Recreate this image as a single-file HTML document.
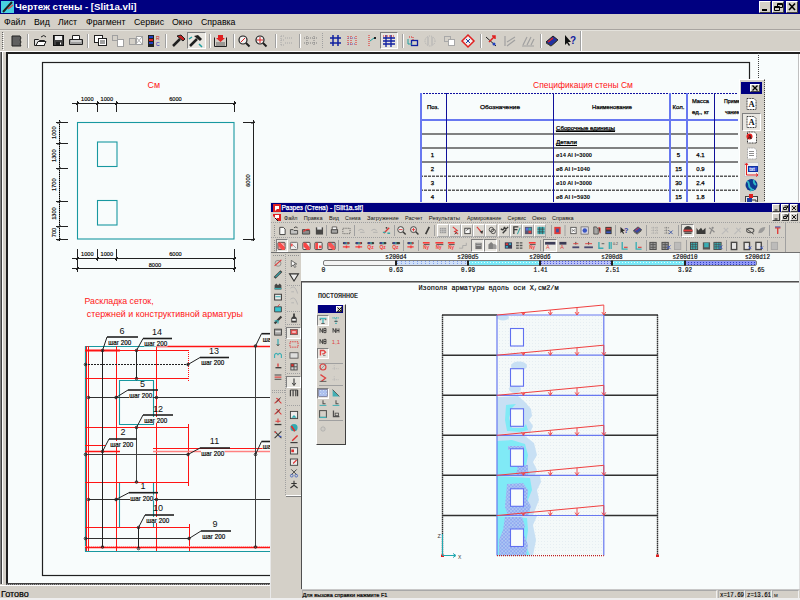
<!DOCTYPE html><html><head><meta charset="utf-8"><style>
*{margin:0;padding:0;box-sizing:border-box}
html,body{width:800px;height:600px;overflow:hidden;background:#d4d0c8;font-family:"Liberation Sans",sans-serif;}
.abs{position:absolute}
.t{position:absolute;white-space:nowrap;line-height:1}
svg{position:absolute;left:0;top:0;overflow:visible}
</style></head><body>
<div class="abs" style="left:0;top:0;width:800px;height:14px;background:#000080"></div><div class="t" style="left:15px;top:2px;font-size:9.7px;font-weight:bold;color:#fff">Чертеж стены - [Slit1a.vli]</div><div class="abs" style="left:759px;top:1px;width:12px;height:12px;background:#d4d0c8;border-top:1px solid #fff;border-left:1px solid #fff;border-right:1px solid #404040;border-bottom:1px solid #404040"></div><div class="abs" style="left:772px;top:1px;width:12px;height:12px;background:#d4d0c8;border-top:1px solid #fff;border-left:1px solid #fff;border-right:1px solid #404040;border-bottom:1px solid #404040"></div><div class="abs" style="left:786px;top:1px;width:12px;height:12px;background:#d4d0c8;border-top:1px solid #fff;border-left:1px solid #fff;border-right:1px solid #404040;border-bottom:1px solid #404040"></div><div class="t" style="left:4px;top:17.5px;font-size:8.8px;color:#000">Файл</div><div class="t" style="left:34px;top:17.5px;font-size:8.8px;color:#000">Вид</div><div class="t" style="left:58px;top:17.5px;font-size:8.8px;color:#000">Лист</div><div class="t" style="left:86px;top:17.5px;font-size:8.8px;color:#000">Фрагмент</div><div class="t" style="left:134px;top:17.5px;font-size:8.8px;color:#000">Сервис</div><div class="t" style="left:172px;top:17.5px;font-size:8.8px;color:#000">Окно</div><div class="t" style="left:201px;top:17.5px;font-size:8.8px;color:#000">Справка</div><div class="abs" style="left:0;top:29px;width:800px;height:1px;background:#a8a4a0"></div><div class="abs" style="left:0;top:30px;width:800px;height:1px;background:#e4e2dc"></div><div class="abs" style="left:187px;top:32px;width:19px;height:17px;background:#e8e6e0;border-top:1px solid #808080;border-left:1px solid #808080;border-right:1px solid #fff;border-bottom:1px solid #fff"></div><div class="abs" style="left:380px;top:32px;width:18px;height:17px;background:#e8e6e0;border-top:1px solid #808080;border-left:1px solid #808080;border-right:1px solid #fff;border-bottom:1px solid #fff"></div><div class="abs" style="left:0;top:51px;width:800px;height:1px;background:#fff"></div><div class="abs" style="left:0;top:52px;width:2px;height:532px;background:#404040"></div><div class="abs" style="left:0;top:52px;width:1px;height:532px;background:#808080"></div><div class="abs" style="left:2px;top:52px;width:1px;height:532px;background:#fff"></div><div class="abs" style="left:6px;top:52px;width:794px;height:2px;background:#202020"></div><div class="abs" style="left:6px;top:52px;width:2px;height:533px;background:#202020"></div><div class="abs" style="left:8px;top:54px;width:790px;height:529px;background:#f8fcfc"></div><div class="abs" style="left:6px;top:583px;width:794px;height:1px;background:#404040"></div><div class="abs" style="left:6px;top:584px;width:794px;height:1px;background:repeating-linear-gradient(90deg,#505050 0 1px,#a0a0a0 1px 2px)"></div><div class="abs" style="left:798px;top:54px;width:1px;height:530px;background:#c0c0c0"></div><div class="abs" style="left:799px;top:54px;width:1px;height:530px;background:#fff"></div><div class="abs" style="left:0;top:585px;width:800px;height:1px;background:#fff"></div><div class="t" style="left:1px;top:589.5px;font-size:9px;color:#000;-webkit-text-stroke:0.2px #000">Готово</div><svg width="800" height="600"><rect x="1" y="1" width="13" height="12" fill="#48d0e0"/><path d="M3 12 L12 2" stroke="#202020" stroke-width="2"/><path d="M8 9 L13 5" stroke="#e04848" stroke-width="1.5"/><rect x="762" y="9" width="5" height="2" fill="#000"/><path d="M777.5 3.5h5v4h-5z M777.5 4.5h5" fill="none" stroke="#000"/><path d="M774.5 6.5h5v4h-5z M774.5 7.5h5" fill="#d4d0c8" stroke="#000"/><path d="M789 3.5 L795 10 M795 3.5 L789 10" stroke="#000" stroke-width="1.6"/><path d="M2.5 32v18" stroke="#606060" stroke-dasharray="1 1"/><path d="M3.5 33v18" stroke="#fff" stroke-dasharray="1 1"/><path d="M27.5 34v14" stroke="#a0a0a0"/><path d="M28.5 34v14" stroke="#fff"/><path d="M87.5 34v14" stroke="#a0a0a0"/><path d="M88.5 34v14" stroke="#fff"/><path d="M165.5 34v14" stroke="#a0a0a0"/><path d="M166.5 34v14" stroke="#fff"/><path d="M209.5 34v14" stroke="#a0a0a0"/><path d="M210.5 34v14" stroke="#fff"/><path d="M233.5 34v14" stroke="#a0a0a0"/><path d="M234.5 34v14" stroke="#fff"/><path d="M275.5 34v14" stroke="#a0a0a0"/><path d="M276.5 34v14" stroke="#fff"/><path d="M299.5 34v14" stroke="#a0a0a0"/><path d="M300.5 34v14" stroke="#fff"/><path d="M402.5 34v14" stroke="#a0a0a0"/><path d="M403.5 34v14" stroke="#fff"/><path d="M480.5 34v14" stroke="#a0a0a0"/><path d="M481.5 34v14" stroke="#fff"/><path d="M540.5 34v14" stroke="#a0a0a0"/><path d="M541.5 34v14" stroke="#fff"/><path d="M322.5 33v16" stroke="#a0a0a0" stroke-dasharray="1 1"/><path d="M580.5 31v20" stroke="#a0a0a0"/><path d="M581.5 31v20" stroke="#fff"/><path d="M12 36h8l1 2-1 2 1 2-1 2 1 2h-9z" fill="#606060" stroke="#202020"/><path d="M34.5 39.5h4l1 1h5v5h-10z" fill="#e0e0e0" stroke="#202020"/><path d="M36 45.5l2-4h8l-2 4z" fill="#fff" stroke="#202020"/><path d="M41 37q3-3 5 0" fill="none" stroke="#202020"/><rect x="53.5" y="35.5" width="10" height="10" fill="#404040" stroke="#101010"/><rect x="55" y="36" width="7" height="4" fill="#f0f0f0"/><rect x="56" y="42" width="5" height="3" fill="#202020"/><rect x="60" y="42.5" width="1" height="2" fill="#fff"/><path d="M72.5 35.5h7v4h-7z" fill="#fff" stroke="#202020"/><path d="M69.5 39.5h13v5h-13z" fill="#a0a0a0" stroke="#202020"/><path d="M71 41h10" stroke="#fff"/><rect x="94.5" y="35.5" width="8" height="7" fill="#fff" stroke="#202020"/><rect x="98.5" y="38.5" width="8" height="7" fill="#fff" stroke="#202020"/><path d="M100 41h5M100 43h5" stroke="#404040"/><rect x="112.5" y="35.5" width="5" height="5" fill="none" stroke="#a0a0a0"/><rect x="117.5" y="39.5" width="6" height="7" fill="#fff" stroke="#a0a0a0"/><rect x="129.5" y="38.5" width="6" height="6" fill="none" stroke="#a0a0a0"/><rect x="136.5" y="36.5" width="6" height="8" fill="#fff" stroke="#a0a0a0"/><path d="M136 37l6 7M142 37l-6 7" stroke="#b0b0b0"/><rect x="148" y="35" width="6" height="12" fill="#202020"/><rect x="149" y="36" width="4" height="2" fill="#2040c0"/><rect x="149" y="39" width="4" height="2" fill="#e02020"/><rect x="149" y="42" width="4" height="2" fill="#2040c0"/><text x="156" y="40" font-size="5" fill="#d02020" font-family="Liberation Sans">R</text><text x="156" y="46" font-size="5" fill="#2020c0" font-family="Liberation Sans">C</text><path d="M173 46l7-7" stroke="#202020" stroke-width="2.5"/><path d="M177 36l4-1 4 4-2 2z" fill="#c02020" stroke="#202020"/><path d="M190 46l7-7" stroke="#202020" stroke-width="2.5"/><path d="M194 36l4-1 4 4-2 2z" fill="#202020"/><path d="M189 39l3-2M199 44l3 3" stroke="#20a0a0" stroke-width="1.5"/><path d="M214.5 37.5v9h12v-9" fill="none" stroke="#202020"/><path d="M216 43h9M216 45h9" stroke="#606060"/><path d="M218 35h5v3h2l-4.5 4-4.5-4h2z" fill="#e02020"/><circle cx="243" cy="40" r="4" fill="#f0f0f0" stroke="#202020" stroke-width="1.2"/><path d="M246 43l3.5 3.5" stroke="#202020" stroke-width="2"/><path d="M241 42l4-4" stroke="#e02020"/><circle cx="260" cy="40" r="4" fill="#f0f0f0" stroke="#202020" stroke-width="1.2"/><path d="M263 43l3.5 3.5" stroke="#202020" stroke-width="2"/><path d="M260 37v6M257 40h6" stroke="#e02020"/><path d="M281 36v10M281 36h3M281 40h3M281 45h3M285 38h7M285 43h7" stroke="#a8a8a8" stroke-dasharray="1 1"/><path d="M304 38h13M304 43h13M307 36v10M314 36v10" stroke="#808080" stroke-dasharray="1 1"/><path d="M330 38h11M330 43h11M333 35v11M338 35v11" stroke="#1020a0" stroke-width="1.5"/><path d="M348 36v10M351 36v10M356 36v10" stroke="#e02020" stroke-dasharray="1 1"/><path d="M348 38h8M348 44h8" stroke="#6060c0" stroke-dasharray="1 1"/><path d="M369 35v11" stroke="#e02020" stroke-dasharray="1 1"/><path d="M370 41l4-3" stroke="#20a0a0"/><rect x="374" y="37" width="2" height="2" fill="#202020"/><path d="M383 38h12M383 41h12M383 44h12M386 35v12M391 35v12" stroke="#1020a0" stroke-width="1.3"/><path d="M383 36h12" stroke="#e02020" stroke-dasharray="1 1"/><path d="M409 37h4v3" stroke="#e02020" fill="none" stroke-dasharray="1 1"/><rect x="411.5" y="40.5" width="6" height="5" fill="none" stroke="#1020a0" stroke-width="1.3"/><path d="M408 39v5h4" stroke="#20a0a0" fill="none"/><circle cx="430" cy="41" r="5" fill="none" stroke="#b0b0b0" stroke-dasharray="1 1"/><path d="M428 37v8M432 37v8" stroke="#b0b0b0"/><rect x="444.5" y="36.5" width="6" height="5" fill="none" stroke="#a8a8a8"/><rect x="448.5" y="39.5" width="6" height="6" fill="#fff" stroke="#a8a8a8"/><path d="M468 35l6 6-6 6-6-6z" fill="#f0f0f0" stroke="#e02020" stroke-width="1.5"/><path d="M466 39l4 4M470 39l-4 4" stroke="#2040a0"/><path d="M486 37l10 9" stroke="#202020"/><path d="M489 42l6-6m-3 0h3v3" stroke="#e02020" stroke-width="1.5" fill="none"/><circle cx="494" cy="44" r="1.5" fill="#2040c0"/><path d="M505 36v10M507 46l8-6M507 42l8-5" stroke="#a0a0a0" stroke-width="1.2"/><path d="M522 46h12M523 45l4-8M527 45l4-8M531 45l3-6" stroke="#a0a0a0" stroke-width="1.2"/><path d="M546 42l7-6 5 4-7 6z" fill="#2030a0" stroke="#202020"/><path d="M548 42l5-4" stroke="#e02020" stroke-width="1.5"/><path d="M546 43l5 3 7-6" fill="none" stroke="#404040"/><path d="M565 35v10l2-2 2 3 1-1-2-3h3z" fill="#101010"/><text x="570" y="44" font-size="10" font-weight="bold" fill="#1020a0" font-family="Liberation Sans">?</text></svg><svg width="800" height="600"><rect x="42.5" y="62.5" width="707" height="513" fill="none" stroke="#202020" stroke-width="1.2"/><path d="M758.5 53v26" stroke="#404040" stroke-dasharray="1 1"/><text x="147.5" y="87.5" font-size="8.9" fill="#ff1414" font-family='"Liberation Sans",sans-serif' font-weight="normal" text-anchor="start" >См</text><rect x="77.5" y="122.5" width="156.5" height="116.5" fill="none" stroke="#1898a0" stroke-width="1.1"/><rect x="97.5" y="142" width="19.5" height="24.5" fill="none" stroke="#1898a0" stroke-width="1.1"/><rect x="97.5" y="200.5" width="19.5" height="24.5" fill="none" stroke="#1898a0" stroke-width="1.1"/><path d="M72 103.5H236" stroke="#202020"/><path d="M77.5 101v11" stroke="#202020"/><path d="M76.0 105l3-3" stroke="#202020"/><path d="M97.5 101v11" stroke="#202020"/><path d="M96.0 105l3-3" stroke="#202020"/><path d="M116.5 101v11" stroke="#202020"/><path d="M115.0 105l3-3" stroke="#202020"/><path d="M234.5 101v11" stroke="#202020"/><path d="M233.0 105l3-3" stroke="#202020"/><text x="87.3" y="101.3" font-size="6.2" fill="#000" font-family='"Liberation Sans",sans-serif' font-weight="normal" text-anchor="middle" stroke="#000" stroke-width="0.15" textLength="12.5" lengthAdjust="spacingAndGlyphs">1000</text><text x="106.8" y="101.3" font-size="6.2" fill="#000" font-family='"Liberation Sans",sans-serif' font-weight="normal" text-anchor="middle" stroke="#000" stroke-width="0.15" textLength="12.5" lengthAdjust="spacingAndGlyphs">1000</text><text x="175.5" y="101.3" font-size="6.2" fill="#000" font-family='"Liberation Sans",sans-serif' font-weight="normal" text-anchor="middle" stroke="#000" stroke-width="0.15" textLength="12.5" lengthAdjust="spacingAndGlyphs">6000</text><path d="M59.5 120V241" stroke="#000" stroke-dasharray="1.5 0.5"/><path d="M56 122.5h12" stroke="#202020"/><path d="M57.5 124.0l3-3" stroke="#202020"/><path d="M56 143.5h12" stroke="#202020"/><path d="M57.5 145.0l3-3" stroke="#202020"/><path d="M56 168.5h12" stroke="#202020"/><path d="M57.5 170.0l3-3" stroke="#202020"/><path d="M56 201.5h12" stroke="#202020"/><path d="M57.5 203.0l3-3" stroke="#202020"/><path d="M56 226.5h12" stroke="#202020"/><path d="M57.5 228.0l3-3" stroke="#202020"/><path d="M56 239.5h12" stroke="#202020"/><path d="M57.5 241.0l3-3" stroke="#202020"/><text x="0" y="0" font-size="6.2" fill="#000" stroke="#000" stroke-width="0.15" font-family='"Liberation Sans",sans-serif' text-anchor="middle" textLength="12.5" lengthAdjust="spacingAndGlyphs" transform="translate(55.6 132.7) rotate(-90)">1000</text><text x="0" y="0" font-size="6.2" fill="#000" stroke="#000" stroke-width="0.15" font-family='"Liberation Sans",sans-serif' text-anchor="middle" textLength="12.5" lengthAdjust="spacingAndGlyphs" transform="translate(55.6 155.7) rotate(-90)">1300</text><text x="0" y="0" font-size="6.2" fill="#000" stroke="#000" stroke-width="0.15" font-family='"Liberation Sans",sans-serif' text-anchor="middle" textLength="12.5" lengthAdjust="spacingAndGlyphs" transform="translate(55.6 184.7) rotate(-90)">1700</text><text x="0" y="0" font-size="6.2" fill="#000" stroke="#000" stroke-width="0.15" font-family='"Liberation Sans",sans-serif' text-anchor="middle" textLength="12.5" lengthAdjust="spacingAndGlyphs" transform="translate(55.6 213.5) rotate(-90)">1300</text><text x="0" y="0" font-size="6.2" fill="#000" stroke="#000" stroke-width="0.15" font-family='"Liberation Sans",sans-serif' text-anchor="middle" textLength="9.5" lengthAdjust="spacingAndGlyphs" transform="translate(55.6 232.5) rotate(-90)">700</text><path d="M253.5 120V241" stroke="#202020"/><path d="M243 122.5h12" stroke="#202020"/><path d="M251.5 124.0l3-3" stroke="#202020"/><path d="M243 239.5h12" stroke="#202020"/><path d="M251.5 241.0l3-3" stroke="#202020"/><text x="0" y="0" font-size="6.2" fill="#000" stroke="#000" stroke-width="0.15" font-family='"Liberation Sans",sans-serif' text-anchor="middle" textLength="12.5" lengthAdjust="spacingAndGlyphs" transform="translate(250 180.5) rotate(-90)">6000</text><path d="M72 258.5H236" stroke="#202020"/><path d="M77.5 249v12" stroke="#202020"/><path d="M76.0 260l3-3" stroke="#202020"/><path d="M97.5 249v12" stroke="#202020"/><path d="M96.0 260l3-3" stroke="#202020"/><path d="M116.5 249v12" stroke="#202020"/><path d="M115.0 260l3-3" stroke="#202020"/><path d="M234.5 249v12" stroke="#202020"/><path d="M233.0 260l3-3" stroke="#202020"/><text x="87.3" y="256.2" font-size="6.2" fill="#000" font-family='"Liberation Sans",sans-serif' font-weight="normal" text-anchor="middle" stroke="#000" stroke-width="0.15" textLength="12.5" lengthAdjust="spacingAndGlyphs">1000</text><text x="106.8" y="256.2" font-size="6.2" fill="#000" font-family='"Liberation Sans",sans-serif' font-weight="normal" text-anchor="middle" stroke="#000" stroke-width="0.15" textLength="12.5" lengthAdjust="spacingAndGlyphs">1000</text><text x="175.5" y="256.2" font-size="6.2" fill="#000" font-family='"Liberation Sans",sans-serif' font-weight="normal" text-anchor="middle" stroke="#000" stroke-width="0.15" textLength="12.5" lengthAdjust="spacingAndGlyphs">6000</text><path d="M72 268.5H236" stroke="#202020"/><path d="M77.5 261v11" stroke="#202020"/><path d="M76.0 270l3-3" stroke="#202020"/><path d="M234.5 261v11" stroke="#202020"/><path d="M233.0 270l3-3" stroke="#202020"/><text x="155" y="266.5" font-size="6.2" fill="#000" font-family='"Liberation Sans",sans-serif' font-weight="normal" text-anchor="middle" stroke="#000" stroke-width="0.15" textLength="12.5" lengthAdjust="spacingAndGlyphs">8000</text><text x="84.5" y="303.6" font-size="8.75" fill="#ff1414" font-family='"Liberation Sans",sans-serif' font-weight="normal" text-anchor="start" >Раскладка сеток,</text><text x="86.8" y="316.7" font-size="8.9" fill="#ff1414" font-family='"Liberation Sans",sans-serif' font-weight="normal" text-anchor="start" >стержней и конструктивной арматуры</text><text x="533" y="88" font-size="8.5" fill="#ff1414" font-family='"Liberation Sans",sans-serif' font-weight="normal" text-anchor="start" >Спецификация стены См</text><path d="M420 134H738" stroke="#585858" stroke-width="1.6" /><path d="M420 148H738" stroke="#585858" stroke-width="1.6" /><path d="M420 162H738" stroke="#585858" stroke-width="1.6" /><path d="M420 176.2H738" stroke="#585858" stroke-width="1.6" stroke-dasharray="3 1"/><path d="M420 190.3H738" stroke="#585858" stroke-width="1.6" stroke-dasharray="3 1"/><path d="M420 204.5H738" stroke="#585858" stroke-width="1.6" stroke-dasharray="3 1"/><path d="M420 93.5H738" stroke="#1010a0" stroke-dasharray="2 1"/><path d="M420 120H738" stroke="#6878f0" stroke-width="2"/><path d="M421 93V210" stroke="#6878f0" stroke-width="2"/><path d="M670 93V210" stroke="#6878f0" stroke-width="2"/><path d="M687 93V210" stroke="#6878f0" stroke-width="2"/><path d="M446.5 93V210" stroke="#10109a"/><path d="M553.5 93V210" stroke="#10109a"/><path d="M714.5 93V210" stroke="#10109a"/><text x="433" y="109" font-size="6" fill="#000" font-family='"Liberation Sans",sans-serif' font-weight="normal" text-anchor="middle" stroke="#000" stroke-width="0.25" textLength="12" lengthAdjust="spacingAndGlyphs">Поз.</text><text x="500" y="109" font-size="6" fill="#000" font-family='"Liberation Sans",sans-serif' font-weight="normal" text-anchor="middle" stroke="#000" stroke-width="0.25" textLength="40" lengthAdjust="spacingAndGlyphs">Обозначение</text><text x="612" y="109" font-size="6" fill="#000" font-family='"Liberation Sans",sans-serif' font-weight="normal" text-anchor="middle" stroke="#000" stroke-width="0.25" textLength="40" lengthAdjust="spacingAndGlyphs">Наименование</text><text x="678.5" y="109" font-size="6" fill="#000" font-family='"Liberation Sans",sans-serif' font-weight="normal" text-anchor="middle" stroke="#000" stroke-width="0.25" textLength="12" lengthAdjust="spacingAndGlyphs">Кол.</text><text x="700.5" y="103" font-size="6" fill="#000" font-family='"Liberation Sans",sans-serif' font-weight="normal" text-anchor="middle" stroke="#000" stroke-width="0.25" textLength="17" lengthAdjust="spacingAndGlyphs">Масса</text><text x="700.5" y="113.5" font-size="6" fill="#000" font-family='"Liberation Sans",sans-serif' font-weight="normal" text-anchor="middle" stroke="#000" stroke-width="0.25" textLength="17" lengthAdjust="spacingAndGlyphs">ед., кг</text><text x="724" y="103" font-size="6" fill="#000" font-family='"Liberation Sans",sans-serif' font-weight="normal" text-anchor="start" stroke="#000" stroke-width="0.25" textLength="18" lengthAdjust="spacingAndGlyphs">Приме-</text><text x="725" y="113.5" font-size="6" fill="#000" font-family='"Liberation Sans",sans-serif' font-weight="normal" text-anchor="start" stroke="#000" stroke-width="0.25" textLength="14" lengthAdjust="spacingAndGlyphs">чание</text><text x="556" y="129.5" font-size="6" fill="#000" font-family='"Liberation Sans",sans-serif' font-weight="normal" text-anchor="start" stroke="#000" stroke-width="0.25" textLength="59" lengthAdjust="spacingAndGlyphs" text-decoration="underline">Сборочные единицы</text><path d="M556 131.5h59" stroke="#000"/><text x="556" y="143.5" font-size="6" fill="#000" font-family='"Liberation Sans",sans-serif' font-weight="normal" text-anchor="start" stroke="#000" stroke-width="0.25" textLength="21" lengthAdjust="spacingAndGlyphs">Детали</text><path d="M556 145.5h21" stroke="#000"/><text x="432.5" y="156.5" font-size="6" fill="#000" font-family='"Liberation Sans",sans-serif' font-weight="normal" text-anchor="middle" stroke="#000" stroke-width="0.25">1</text><text x="556" y="156.5" font-size="6" fill="#000" font-family='"Liberation Sans",sans-serif' font-weight="bold" text-anchor="start" textLength="36" lengthAdjust="spacingAndGlyphs">ø14 AI l=3000</text><text x="678.5" y="156.5" font-size="6" fill="#000" font-family='"Liberation Sans",sans-serif' font-weight="normal" text-anchor="middle" stroke="#000" stroke-width="0.25">5</text><text x="700.5" y="156.5" font-size="6" fill="#000" font-family='"Liberation Sans",sans-serif' font-weight="normal" text-anchor="middle" stroke="#000" stroke-width="0.25">4.1</text><text x="432.5" y="170.6" font-size="6" fill="#000" font-family='"Liberation Sans",sans-serif' font-weight="normal" text-anchor="middle" stroke="#000" stroke-width="0.25">2</text><text x="556" y="170.6" font-size="6" fill="#000" font-family='"Liberation Sans",sans-serif' font-weight="bold" text-anchor="start" textLength="34" lengthAdjust="spacingAndGlyphs">ø8 AI l=1040</text><text x="678.5" y="170.6" font-size="6" fill="#000" font-family='"Liberation Sans",sans-serif' font-weight="normal" text-anchor="middle" stroke="#000" stroke-width="0.25">15</text><text x="700.5" y="170.6" font-size="6" fill="#000" font-family='"Liberation Sans",sans-serif' font-weight="normal" text-anchor="middle" stroke="#000" stroke-width="0.25">0.9</text><text x="432.5" y="184.7" font-size="6" fill="#000" font-family='"Liberation Sans",sans-serif' font-weight="normal" text-anchor="middle" stroke="#000" stroke-width="0.25">3</text><text x="556" y="184.7" font-size="6" fill="#000" font-family='"Liberation Sans",sans-serif' font-weight="bold" text-anchor="start" textLength="36" lengthAdjust="spacingAndGlyphs">ø10 AI l=3000</text><text x="678.5" y="184.7" font-size="6" fill="#000" font-family='"Liberation Sans",sans-serif' font-weight="normal" text-anchor="middle" stroke="#000" stroke-width="0.25">30</text><text x="700.5" y="184.7" font-size="6" fill="#000" font-family='"Liberation Sans",sans-serif' font-weight="normal" text-anchor="middle" stroke="#000" stroke-width="0.25">2.4</text><text x="432.5" y="198.8" font-size="6" fill="#000" font-family='"Liberation Sans",sans-serif' font-weight="normal" text-anchor="middle" stroke="#000" stroke-width="0.25">4</text><text x="556" y="198.8" font-size="6" fill="#000" font-family='"Liberation Sans",sans-serif' font-weight="bold" text-anchor="start" textLength="34" lengthAdjust="spacingAndGlyphs">ø8 AI l=5930</text><text x="678.5" y="198.8" font-size="6" fill="#000" font-family='"Liberation Sans",sans-serif' font-weight="normal" text-anchor="middle" stroke="#000" stroke-width="0.25">15</text><text x="700.5" y="198.8" font-size="6" fill="#000" font-family='"Liberation Sans",sans-serif' font-weight="normal" text-anchor="middle" stroke="#000" stroke-width="0.25">1.8</text><path d="M85 346.5H156 M85.5 346V551.5 M85 551.5H271" stroke="#1898a0" stroke-width="1.2" fill="none" /><path d="M119.5 380.5h34v44h-34z" stroke="#1898a0" stroke-width="1.1" fill="none" /><path d="M119.5 482v45.5h34V482" stroke="#1898a0" stroke-width="1.1" fill="none" /><path d="M86.5 346V551" stroke="#ff1414" stroke-width="1" fill="none" /><path d="M88.5 346V551" stroke="#ff1414" stroke-width="1" fill="none" /><path d="M116.5 346V551" stroke="#ff1414" stroke-width="1" fill="none" /><path d="M156.5 346V551" stroke="#ff1414" stroke-width="1" fill="none" /><path d="M188.5 350v32" stroke="#ff1414" stroke-width="1" fill="none" stroke-dasharray="1 1"/><path d="M188.5 424v62" stroke="#ff1414" stroke-width="1" fill="none" /><path d="M189.5 524v27" stroke="#ff1414" stroke-width="1" fill="none" /><path d="M156 346.5H271" stroke="#ff1414" stroke-width="1.3" fill="none" /><path d="M85 350.5H188" stroke="#ff1414" stroke-width="1" fill="none" /><path d="M85 350.5H120" stroke="#ff1414" stroke-width="2" fill="none" /><path d="M85 378.5H188" stroke="#ff1414" stroke-width="1" fill="none" /><path d="M85 427.5H188" stroke="#ff1414" stroke-width="1" fill="none" /><path d="M85 445.5H105" stroke="#ff1414" stroke-width="1" fill="none" /><path d="M85 451.5H120" stroke="#ff1414" stroke-width="1.3" fill="none" /><path d="M153 448.5H271" stroke="#ff1414" stroke-width="1" fill="none" /><path d="M153 451.5H271" stroke="#ff8080" stroke-width="1.3" fill="none" /><path d="M85 482.5H188" stroke="#ff1414" stroke-width="1" fill="none" /><path d="M85 527.5H190" stroke="#ff1414" stroke-width="1" fill="none" /><path d="M85 547.5H271" stroke="#ff1414" stroke-width="1.6" fill="none" /><path d="M85 546.5H271" stroke="#ff9090" stroke-width="1" fill="none" stroke-dasharray="1 1"/><path d="M85 364.5H188" stroke="#202020" stroke-width="1" fill="none" stroke-dasharray="2 1"/><path d="M88 397.5H271" stroke="#303030" stroke-width="1.2" fill="none" /><path d="M85 454.5H188" stroke="#404040" stroke-width="1" fill="none" /><path d="M88 499.5H271" stroke="#303030" stroke-width="1" fill="none" /><path d="M85 538.5H189" stroke="#303030" stroke-width="1" fill="none" /><path d="M102.5 350V547" stroke="#202020" stroke-width="1" fill="none" /><path d="M136.5 350.5V378.5" stroke="#202020" stroke-width="1" fill="none" /><path d="M136.5 427V482" stroke="#404040" stroke-width="1" fill="none" /><path d="M138.5 527V548.5" stroke="#202020" stroke-width="1" fill="none" /><path d="M255.5 346V547" stroke="#404040" stroke-width="1" fill="none" /><circle cx="102.5" cy="350.5" r="1.3" fill="none" stroke="#202020" stroke-width="0.9"/><circle cx="136.5" cy="350.5" r="1.3" fill="none" stroke="#202020" stroke-width="0.9"/><circle cx="136.5" cy="378.5" r="1.3" fill="none" stroke="#202020" stroke-width="0.9"/><circle cx="85.5" cy="364.5" r="1.3" fill="none" stroke="#202020" stroke-width="0.9"/><circle cx="188" cy="364.5" r="1.3" fill="none" stroke="#202020" stroke-width="0.9"/><circle cx="88.5" cy="397.5" r="1.3" fill="none" stroke="#202020" stroke-width="0.9"/><circle cx="116" cy="397.5" r="1.3" fill="none" stroke="#202020" stroke-width="0.9"/><circle cx="156.5" cy="397.5" r="1.3" fill="none" stroke="#202020" stroke-width="0.9"/><circle cx="136.5" cy="427.5" r="1.3" fill="none" stroke="#202020" stroke-width="0.9"/><circle cx="102.5" cy="451.5" r="1.3" fill="none" stroke="#202020" stroke-width="0.9"/><circle cx="85.5" cy="454.5" r="1.3" fill="none" stroke="#202020" stroke-width="0.9"/><circle cx="188" cy="454.5" r="1.3" fill="none" stroke="#202020" stroke-width="0.9"/><circle cx="136.5" cy="482" r="1.3" fill="none" stroke="#202020" stroke-width="0.9"/><circle cx="88.5" cy="499.5" r="1.3" fill="none" stroke="#202020" stroke-width="0.9"/><circle cx="116" cy="499.5" r="1.3" fill="none" stroke="#202020" stroke-width="0.9"/><circle cx="156.5" cy="499.5" r="1.3" fill="none" stroke="#202020" stroke-width="0.9"/><circle cx="138.5" cy="527.5" r="1.3" fill="none" stroke="#202020" stroke-width="0.9"/><circle cx="85.5" cy="538.5" r="1.3" fill="none" stroke="#202020" stroke-width="0.9"/><circle cx="189" cy="538.5" r="1.3" fill="none" stroke="#202020" stroke-width="0.9"/><circle cx="102.5" cy="547" r="1.3" fill="none" stroke="#202020" stroke-width="0.9"/><circle cx="138.5" cy="548.5" r="1.3" fill="none" stroke="#202020" stroke-width="0.9"/><circle cx="255.5" cy="346" r="1.3" fill="none" stroke="#202020" stroke-width="0.9"/><circle cx="255.5" cy="454.5" r="1.3" fill="none" stroke="#202020" stroke-width="0.9"/><circle cx="255.5" cy="547" r="1.3" fill="none" stroke="#202020" stroke-width="0.9"/><path d="M102.5 350.5L107 337" stroke="#202020" stroke-width="1" fill="none" /><path d="M107 337H138" stroke="#202020" stroke-width="1.6" fill="none" /><text x="122" y="333.8" font-size="9" fill="#101010" font-family='"Liberation Sans",sans-serif' font-weight="normal" text-anchor="middle" >6</text><rect x="108" y="339" width="23.5" height="6" fill="#f8fcfc"/><text x="108.2" y="344.8" font-size="7.2" fill="#000" font-family='"Liberation Sans",sans-serif' font-weight="normal" text-anchor="start" stroke="#000" stroke-width="0.2" textLength="23" lengthAdjust="spacingAndGlyphs">шаг 200</text><path d="M136.5 350.5L143 338.5" stroke="#202020" stroke-width="1" fill="none" /><path d="M143 338.5H172" stroke="#202020" stroke-width="1.6" fill="none" /><text x="157" y="335.3" font-size="9" fill="#101010" font-family='"Liberation Sans",sans-serif' font-weight="normal" text-anchor="middle" >14</text><rect x="144" y="340.5" width="23.5" height="6" fill="#f8fcfc"/><text x="144.2" y="346.3" font-size="7.2" fill="#000" font-family='"Liberation Sans",sans-serif' font-weight="normal" text-anchor="start" stroke="#000" stroke-width="0.2" textLength="23" lengthAdjust="spacingAndGlyphs">шаг 200</text><path d="M188 364.5L200 357.5" stroke="#202020" stroke-width="1" fill="none" /><path d="M200 357.5H229" stroke="#202020" stroke-width="1.6" fill="none" /><text x="214" y="354.3" font-size="9" fill="#101010" font-family='"Liberation Sans",sans-serif' font-weight="normal" text-anchor="middle" >13</text><rect x="201" y="359.5" width="23.5" height="6" fill="#f8fcfc"/><text x="201.2" y="365.3" font-size="7.2" fill="#000" font-family='"Liberation Sans",sans-serif' font-weight="normal" text-anchor="start" stroke="#000" stroke-width="0.2" textLength="23" lengthAdjust="spacingAndGlyphs">шаг 200</text><path d="M116 397.5L128 390" stroke="#202020" stroke-width="1" fill="none" /><path d="M128 390H158" stroke="#202020" stroke-width="1.6" fill="none" /><text x="142.5" y="386.8" font-size="9" fill="#101010" font-family='"Liberation Sans",sans-serif' font-weight="normal" text-anchor="middle" >5</text><rect x="129" y="392" width="23.5" height="6" fill="#f8fcfc"/><text x="129.2" y="397.8" font-size="7.2" fill="#000" font-family='"Liberation Sans",sans-serif' font-weight="normal" text-anchor="start" stroke="#000" stroke-width="0.2" textLength="23" lengthAdjust="spacingAndGlyphs">шаг 200</text><path d="M136.5 427.5L143 415" stroke="#202020" stroke-width="1" fill="none" /><path d="M143 415H173" stroke="#202020" stroke-width="1.6" fill="none" /><text x="158" y="412.3" font-size="9" fill="#101010" font-family='"Liberation Sans",sans-serif' font-weight="normal" text-anchor="middle" >12</text><rect x="144" y="417" width="23.5" height="6" fill="#f8fcfc"/><text x="144.2" y="422.8" font-size="7.2" fill="#000" font-family='"Liberation Sans",sans-serif' font-weight="normal" text-anchor="start" stroke="#000" stroke-width="0.2" textLength="23" lengthAdjust="spacingAndGlyphs">шаг 200</text><path d="M102.5 451.5L109 439" stroke="#202020" stroke-width="1" fill="none" /><path d="M109 439H137" stroke="#202020" stroke-width="1.6" fill="none" /><text x="123" y="435.3" font-size="9" fill="#101010" font-family='"Liberation Sans",sans-serif' font-weight="normal" text-anchor="middle" >2</text><rect x="110" y="441" width="23.5" height="6" fill="#f8fcfc"/><text x="110.2" y="446.8" font-size="7.2" fill="#000" font-family='"Liberation Sans",sans-serif' font-weight="normal" text-anchor="start" stroke="#000" stroke-width="0.2" textLength="23" lengthAdjust="spacingAndGlyphs">шаг 200</text><path d="M188 454.5L200 448" stroke="#202020" stroke-width="1" fill="none" /><path d="M200 448H230" stroke="#202020" stroke-width="1.6" fill="none" /><text x="214.5" y="444.3" font-size="9" fill="#101010" font-family='"Liberation Sans",sans-serif' font-weight="normal" text-anchor="middle" >11</text><rect x="201" y="450" width="23.5" height="6" fill="#f8fcfc"/><text x="201.2" y="455.8" font-size="7.2" fill="#000" font-family='"Liberation Sans",sans-serif' font-weight="normal" text-anchor="start" stroke="#000" stroke-width="0.2" textLength="23" lengthAdjust="spacingAndGlyphs">шаг 200</text><path d="M116 499.5L129 492.7" stroke="#202020" stroke-width="1" fill="none" /><path d="M129 492.7H158" stroke="#202020" stroke-width="1.6" fill="none" /><text x="143" y="489.3" font-size="9" fill="#101010" font-family='"Liberation Sans",sans-serif' font-weight="normal" text-anchor="middle" >1</text><rect x="130" y="494.7" width="23.5" height="6" fill="#f8fcfc"/><text x="130.2" y="500.5" font-size="7.2" fill="#000" font-family='"Liberation Sans",sans-serif' font-weight="normal" text-anchor="start" stroke="#000" stroke-width="0.2" textLength="23" lengthAdjust="spacingAndGlyphs">шаг 200</text><path d="M138.5 527.5L145 515" stroke="#202020" stroke-width="1" fill="none" /><path d="M145 515H174" stroke="#202020" stroke-width="1.6" fill="none" /><text x="158" y="511.3" font-size="9" fill="#101010" font-family='"Liberation Sans",sans-serif' font-weight="normal" text-anchor="middle" >10</text><rect x="146" y="517" width="23.5" height="6" fill="#f8fcfc"/><text x="146.2" y="522.8" font-size="7.2" fill="#000" font-family='"Liberation Sans",sans-serif' font-weight="normal" text-anchor="start" stroke="#000" stroke-width="0.2" textLength="23" lengthAdjust="spacingAndGlyphs">шаг 200</text><path d="M189 538.5L201 531" stroke="#202020" stroke-width="1" fill="none" /><path d="M201 531H231" stroke="#202020" stroke-width="1.6" fill="none" /><text x="215" y="527.3" font-size="9" fill="#101010" font-family='"Liberation Sans",sans-serif' font-weight="normal" text-anchor="middle" >9</text><rect x="202" y="533" width="23.5" height="6" fill="#f8fcfc"/><text x="202.2" y="538.8" font-size="7.2" fill="#000" font-family='"Liberation Sans",sans-serif' font-weight="normal" text-anchor="start" stroke="#000" stroke-width="0.2" textLength="23" lengthAdjust="spacingAndGlyphs">шаг 200</text><path d="M255.5 346L261.5 333.7" stroke="#202020" stroke-width="1" fill="none" /><path d="M261.5 333.7H271" stroke="#202020" stroke-width="1.6" fill="none" /><rect x="262.5" y="335.7" width="8.5" height="6" fill="#f8fcfc"/><text x="262.7" y="341.5" font-size="7.2" fill="#000" font-family='"Liberation Sans",sans-serif' font-weight="normal" text-anchor="start" stroke="#000" stroke-width="0.2" textLength="23" lengthAdjust="spacingAndGlyphs">шаг 200</text><path d="M255.5 454.5L261.5 441.5" stroke="#202020" stroke-width="1" fill="none" /><path d="M261.5 441.5H271" stroke="#202020" stroke-width="1.6" fill="none" /><rect x="262.5" y="443.5" width="8.5" height="6" fill="#f8fcfc"/><text x="262.7" y="449.3" font-size="7.2" fill="#000" font-family='"Liberation Sans",sans-serif' font-weight="normal" text-anchor="start" stroke="#000" stroke-width="0.2" textLength="23" lengthAdjust="spacingAndGlyphs">шаг 200</text></svg><div class="abs" style="left:739px;top:79px;width:26px;height:140px;background:#d4d0c8;border-left:1px solid #fff;border-top:1px solid #fff;border-right:1px dotted #404040"></div><div class="abs" style="left:741px;top:82px;width:21px;height:12px;background:#000080"></div><div class="abs" style="left:750px;top:84px;width:10px;height:8px;background:#d4d0c8;border-top:1px solid #fff;border-left:1px solid #fff;border-right:1px solid #404040;border-bottom:1px solid #404040"></div><div class="abs" style="left:742px;top:113px;width:19px;height:18px;background:#e8e6e0;border-top:1px solid #808080;border-left:1px solid #808080;border-right:1px solid #fff;border-bottom:1px solid #fff"></div><svg width="800" height="600"><path d="M752.5 85.5l5 5M757.5 85.5l-5 5" stroke="#000" stroke-width="1.3"/><path d="M747.0 98.5h7l2 2v9h-9z" fill="#fff" stroke="#303030" stroke-dasharray="1 0.6"/><text x="751.5" y="107" font-size="8.5" font-family="Liberation Serif" font-weight="bold" text-anchor="middle" fill="#101010">A</text><path d="M747.0 116.5h7l2 2v9h-9z" fill="#fff" stroke="#303030" stroke-dasharray="1 0.6"/><text x="751.5" y="125" font-size="8.5" font-family="Liberation Serif" font-weight="bold" text-anchor="middle" fill="#101010">A</text><path d="M747.5 132.0h7l2 2v9h-9z" fill="#fff" stroke="#303030" stroke-dasharray="1 0.6"/><circle cx="749.5" cy="136.5" r="3" fill="#e82020"/><text x="749.5" y="139.0" font-size="6" font-family="Liberation Serif" font-weight="bold" text-anchor="middle" fill="#202020">A</text><path d="M747.5 148.0h7l2 2v9h-9z" fill="#fff" stroke="#a0a0a0" stroke-dasharray="1 0.6"/><path d="M749 151.5h5M749 153.5h5M749 155.5h5" stroke="#909090"/><rect x="744.5" y="162.5" width="14" height="14" fill="#eeeeee" stroke="#c8c8c8"/><path d="M746.5 164v11h11" stroke="#e02020" fill="none"/><path d="M745 165l1.5-2 1.5 2M756 173.5l2 1.5-2 1.5" stroke="#e02020" fill="none"/><rect x="748.5" y="166.5" width="9" height="5" fill="#3050d0" stroke="#1030a0"/><text x="749.2" y="170.8" font-size="4.5" fill="#fff" font-family="Liberation Sans" font-weight="bold">txt</text><circle cx="751.5" cy="185" r="6" fill="#103890"/><path d="M747 181q2 1 2 4t3 4M754 180q-1 3 2 5M750 191q2-2 4-1" stroke="#30b8c8" stroke-width="1.8" fill="none"/><rect x="745.5" y="196.5" width="12" height="10" fill="#e8e8e8" stroke="#404040"/><rect x="747" y="198" width="5" height="6" fill="#2040a0"/><rect x="749" y="194" width="4" height="4" fill="#e02020"/><path d="M752 200h4v4" stroke="#303030" fill="none"/></svg><div class="abs" style="left:270px;top:202px;width:530px;height:396px;background:#d4d0c8;border-left:1px solid #e8e8e8;border-top:1px solid #e8e8e8"></div><div class="abs" style="left:271px;top:203px;width:529px;height:9px;background:#000080"></div><svg width="800" height="600"><text x="281.5" y="210.3" font-size="6.8" fill="#fff" stroke="#fff" stroke-width="0.25" font-family='"Liberation Sans",sans-serif' textLength="81.5" lengthAdjust="spacingAndGlyphs">Разрез (Стена) - [Slit1a.slt]</text></svg><div class="abs" style="left:772px;top:204px;width:8px;height:8px;background:#d4d0c8;border-top:1px solid #fff;border-left:1px solid #fff;border-right:1px solid #404040;border-bottom:1px solid #404040"></div><div class="abs" style="left:772px;top:213px;width:8px;height:8px;background:#d4d0c8;border-top:1px solid #fff;border-left:1px solid #fff;border-right:1px solid #404040;border-bottom:1px solid #404040"></div><div class="abs" style="left:781px;top:204px;width:8px;height:8px;background:#d4d0c8;border-top:1px solid #fff;border-left:1px solid #fff;border-right:1px solid #404040;border-bottom:1px solid #404040"></div><div class="abs" style="left:781px;top:213px;width:8px;height:8px;background:#d4d0c8;border-top:1px solid #fff;border-left:1px solid #fff;border-right:1px solid #404040;border-bottom:1px solid #404040"></div><div class="abs" style="left:790px;top:204px;width:8px;height:8px;background:#d4d0c8;border-top:1px solid #fff;border-left:1px solid #fff;border-right:1px solid #404040;border-bottom:1px solid #404040"></div><div class="abs" style="left:790px;top:213px;width:8px;height:8px;background:#d4d0c8;border-top:1px solid #fff;border-left:1px solid #fff;border-right:1px solid #404040;border-bottom:1px solid #404040"></div><div class="abs" style="left:301px;top:253px;width:499px;height:336px;background:#f8fcfc"></div><div class="abs" style="left:271px;top:252px;width:529px;height:1px;background:#707070"></div><div class="abs" style="left:301px;top:281px;width:1px;height:308px;background:#505050"></div><div class="abs" style="left:301px;top:281px;width:499px;height:1px;background:#505050"></div><div class="abs" style="left:302px;top:282px;width:498px;height:1px;background:#a0a0a0"></div><div class="abs" style="left:799px;top:253px;width:1px;height:336px;background:#e0e0e0"></div><div class="abs" style="left:276px;top:239px;width:12px;height:13px;background:#e8e6e0;border-top:1px solid #808080;border-left:1px solid #808080;border-right:1px solid #fff;border-bottom:1px solid #fff"></div><div class="abs" style="left:471px;top:239px;width:13px;height:13px;background:#e8e6e0;border-top:1px solid #808080;border-left:1px solid #808080;border-right:1px solid #fff;border-bottom:1px solid #fff"></div><div class="abs" style="left:484px;top:239px;width:13px;height:13px;background:#e8e6e0;border-top:1px solid #808080;border-left:1px solid #808080;border-right:1px solid #fff;border-bottom:1px solid #fff"></div><div class="abs" style="left:543px;top:239px;width:14px;height:13px;background:#e8e6e0;border-top:1px solid #808080;border-left:1px solid #808080;border-right:1px solid #fff;border-bottom:1px solid #fff"></div><div class="abs" style="left:681px;top:224px;width:13px;height:13px;background:#e8e6e0;border-top:1px solid #808080;border-left:1px solid #808080;border-right:1px solid #fff;border-bottom:1px solid #fff"></div><div class="abs" style="left:436.5px;top:224px;width:12px;height:13px;background:#dcd9d2;border-top:1px solid #fff;border-left:1px solid #fff;border-right:1px solid #a8a8a8;border-bottom:1px solid #a8a8a8"></div><div class="abs" style="left:448.7px;top:224px;width:12px;height:13px;background:#dcd9d2;border-top:1px solid #fff;border-left:1px solid #fff;border-right:1px solid #a8a8a8;border-bottom:1px solid #a8a8a8"></div><div class="abs" style="left:460.9px;top:224px;width:12px;height:13px;background:#dcd9d2;border-top:1px solid #fff;border-left:1px solid #fff;border-right:1px solid #a8a8a8;border-bottom:1px solid #a8a8a8"></div><div class="abs" style="left:473.1px;top:224px;width:12px;height:13px;background:#dcd9d2;border-top:1px solid #fff;border-left:1px solid #fff;border-right:1px solid #a8a8a8;border-bottom:1px solid #a8a8a8"></div><div class="abs" style="left:485.3px;top:224px;width:12px;height:13px;background:#dcd9d2;border-top:1px solid #fff;border-left:1px solid #fff;border-right:1px solid #a8a8a8;border-bottom:1px solid #a8a8a8"></div><div class="abs" style="left:497.5px;top:224px;width:12px;height:13px;background:#dcd9d2;border-top:1px solid #fff;border-left:1px solid #fff;border-right:1px solid #a8a8a8;border-bottom:1px solid #a8a8a8"></div><div class="abs" style="left:509.7px;top:224px;width:12px;height:13px;background:#dcd9d2;border-top:1px solid #fff;border-left:1px solid #fff;border-right:1px solid #a8a8a8;border-bottom:1px solid #a8a8a8"></div><div class="abs" style="left:521.9px;top:224px;width:12px;height:13px;background:#dcd9d2;border-top:1px solid #fff;border-left:1px solid #fff;border-right:1px solid #a8a8a8;border-bottom:1px solid #a8a8a8"></div><div class="abs" style="left:534.1px;top:224px;width:12px;height:13px;background:#dcd9d2;border-top:1px solid #fff;border-left:1px solid #fff;border-right:1px solid #a8a8a8;border-bottom:1px solid #a8a8a8"></div><div class="abs" style="left:286px;top:327px;width:15px;height:12px;background:#e8e6e0;border-top:1px solid #808080;border-left:1px solid #808080;border-right:1px solid #fff;border-bottom:1px solid #fff"></div><div class="abs" style="left:286px;top:376px;width:15px;height:12px;background:#e8e6e0;border-top:1px solid #808080;border-left:1px solid #808080;border-right:1px solid #fff;border-bottom:1px solid #fff"></div><div class="abs" style="left:301px;top:589px;width:499px;height:1px;background:#c8c8c8"></div><div class="abs" style="left:302px;top:590px;width:415px;height:8px;border-top:1px solid #a8a8a8;border-left:1px solid #b0b0b0;border-right:1px solid #f0f0f0"></div><div class="abs" style="left:718px;top:590px;width:27px;height:8px;border-top:1px solid #a8a8a8;border-left:1px solid #b0b0b0;border-right:1px solid #f0f0f0"></div><div class="abs" style="left:745px;top:590px;width:27px;height:8px;border-top:1px solid #a8a8a8;border-left:1px solid #b0b0b0;border-right:1px solid #f0f0f0"></div><div class="abs" style="left:772px;top:590px;width:27px;height:8px;border-top:1px solid #a8a8a8;border-left:1px solid #b0b0b0;border-right:1px solid #f0f0f0"></div><div class="abs" style="left:316px;top:304px;width:30px;height:141px;background:#d4d0c8;border-left:1px solid #fff;border-top:1px solid #fff;border-right:1px solid #404040;border-bottom:1px solid #404040"></div><div class="abs" style="left:318px;top:305px;width:25px;height:8px;background:#000080"></div><div class="abs" style="left:336px;top:306px;width:6px;height:6px;background:#d4d0c8;border-top:1px solid #fff;border-left:1px solid #fff;border-right:1px solid #404040;border-bottom:1px solid #404040"></div><div class="abs" style="left:317px;top:315px;width:12px;height:11px;background:#e8e6e0;border-top:1px solid #808080;border-left:1px solid #808080;border-right:1px solid #fff;border-bottom:1px solid #fff"></div><div class="abs" style="left:317px;top:348px;width:12px;height:11px;background:#e8e6e0;border-top:1px solid #808080;border-left:1px solid #808080;border-right:1px solid #fff;border-bottom:1px solid #fff"></div><div class="abs" style="left:317px;top:388px;width:12px;height:11px;background:#e8e6e0;border-top:1px solid #808080;border-left:1px solid #808080;border-right:1px solid #fff;border-bottom:1px solid #fff"></div><svg width="800" height="600"><text x="284" y="219.7" font-size="6" fill="#101010" font-family='"Liberation Sans",sans-serif' font-weight="normal" text-anchor="start" textLength="13.5" lengthAdjust="spacingAndGlyphs">Файл</text><text x="303.7" y="219.7" font-size="6" fill="#101010" font-family='"Liberation Sans",sans-serif' font-weight="normal" text-anchor="start" textLength="18.8" lengthAdjust="spacingAndGlyphs">Правка</text><text x="329" y="219.7" font-size="6" fill="#101010" font-family='"Liberation Sans",sans-serif' font-weight="normal" text-anchor="start" textLength="10" lengthAdjust="spacingAndGlyphs">Вид</text><text x="345" y="219.7" font-size="6" fill="#101010" font-family='"Liberation Sans",sans-serif' font-weight="normal" text-anchor="start" textLength="15.5" lengthAdjust="spacingAndGlyphs">Схема</text><text x="367" y="219.7" font-size="6" fill="#101010" font-family='"Liberation Sans",sans-serif' font-weight="normal" text-anchor="start" textLength="31.7" lengthAdjust="spacingAndGlyphs">Загружение</text><text x="405" y="219.7" font-size="6" fill="#101010" font-family='"Liberation Sans",sans-serif' font-weight="normal" text-anchor="start" textLength="17.5" lengthAdjust="spacingAndGlyphs">Расчет</text><text x="428.7" y="219.7" font-size="6" fill="#101010" font-family='"Liberation Sans",sans-serif' font-weight="normal" text-anchor="start" textLength="31.3" lengthAdjust="spacingAndGlyphs">Результаты</text><text x="467" y="219.7" font-size="6" fill="#101010" font-family='"Liberation Sans",sans-serif' font-weight="normal" text-anchor="start" textLength="34.2" lengthAdjust="spacingAndGlyphs">Армирование</text><text x="507.5" y="219.7" font-size="6" fill="#101010" font-family='"Liberation Sans",sans-serif' font-weight="normal" text-anchor="start" textLength="18.5" lengthAdjust="spacingAndGlyphs">Сервис</text><text x="532" y="219.7" font-size="6" fill="#101010" font-family='"Liberation Sans",sans-serif' font-weight="normal" text-anchor="start" textLength="14" lengthAdjust="spacingAndGlyphs">Окно</text><text x="552" y="219.7" font-size="6" fill="#101010" font-family='"Liberation Sans",sans-serif' font-weight="normal" text-anchor="start" textLength="21.7" lengthAdjust="spacingAndGlyphs">Справка</text><text x="302.5" y="596.8" font-size="6.2" fill="#000" font-family='"Liberation Sans",sans-serif' font-weight="normal" text-anchor="start" stroke="#000" stroke-width="0.2" textLength="85" lengthAdjust="spacingAndGlyphs">Для вызова справки нажмите F1</text><text x="720" y="596.8" font-size="6.4" fill="#000" font-family='"Liberation Mono",monospace' font-weight="normal" text-anchor="start" stroke="#000" stroke-width="0.15" textLength="24" lengthAdjust="spacingAndGlyphs">x=17.69</text><text x="747" y="596.8" font-size="6.4" fill="#000" font-family='"Liberation Mono",monospace' font-weight="normal" text-anchor="start" stroke="#000" stroke-width="0.15" textLength="24" lengthAdjust="spacingAndGlyphs">z=13.61</text><text x="774" y="596.5" font-size="6.2" fill="#101010" font-family='"Liberation Mono",monospace' font-weight="normal" text-anchor="start" >м</text><rect x="273" y="204" width="8" height="8" fill="#e02020"/><path d="M275 206h4v3h-2l-2 2z" fill="#fff"/><path d="M273 214h8v7h-3l-5-5z" fill="#e02020"/><path d="M275 215h4v3h-2l-2 2z" fill="#fff"/><path d="M275 218l3 3" stroke="#101010"/><path d="M774.5 210h3M783.5 207.5h3v2h-3zM784.5 206h3v2M792 206l4 4M796 206l-4 4" stroke="#000" stroke-width="0.9" fill="none"/><path d="M774.5 219h3M783.5 216.5h3v2h-3zM784.5 215h3v2M792 215l4 4M796 215l-4 4" stroke="#000" stroke-width="0.9" fill="none"/><path d="M271 222.5H800" stroke="#a0a0a0" stroke-dasharray="1 1"/><path d="M271 237.5H785" stroke="#a0a0a0" stroke-dasharray="1 1"/><path d="M785.5 223v29" stroke="#a0a0a0"/><path d="M274.5 225v11M274.5 240v11" stroke="#909090" stroke-dasharray="1 1"/><path d="M326.5 225v11" stroke="#a0a0a0"/><path d="M354.5 225v11" stroke="#a0a0a0"/><path d="M394.5 225v11" stroke="#a0a0a0"/><path d="M434.5 225v11" stroke="#a0a0a0"/><path d="M551.5 225v11" stroke="#a0a0a0"/><path d="M565 225v11" stroke="#a0a0a0"/><path d="M615.5 225v11" stroke="#a0a0a0"/><path d="M646.5 225v11" stroke="#a0a0a0"/><path d="M678.5 225v11" stroke="#a0a0a0"/><path d="M769.5 225v11" stroke="#a0a0a0"/><path d="M338.5 240v11" stroke="#a0a0a0"/><path d="M403.5 240v11" stroke="#a0a0a0"/><path d="M418.5 240v11" stroke="#a0a0a0"/><path d="M499.5 240v11" stroke="#a0a0a0"/><path d="M540.5 240v11" stroke="#a0a0a0"/><path d="M646.5 240v11" stroke="#a0a0a0"/><path d="M686.5 240v11" stroke="#a0a0a0"/><path d="M726.5 240v11" stroke="#a0a0a0"/><path d="M767.5 240v11" stroke="#a0a0a0"/><g transform="translate(282.0 230.5) scale(0.9) translate(-282.0 -230.5)" opacity="0.85"><path d="M279.5 227.0h4l2 2v6h-6z" fill="#fff" stroke="#202020"/></g><g transform="translate(294.0 230.5) scale(0.9) translate(-294.0 -230.5)" opacity="0.85"><path d="M290 229.5h3l1 1h4v4h-8z" fill="#c0c0c0" stroke="#202020" stroke-width="0.9"/><path d="M294 227.5q2-2 4 0" stroke="#202020" fill="none"/></g><g transform="translate(306.5 230.5) scale(0.9) translate(-306.5 -230.5)" opacity="0.85"><path d="M302 229.5h3l1 1h4v4h-8z" fill="#808080" stroke="#202020" stroke-width="0.9"/><path d="M303 231.5q3-3 7-2" stroke="#e02020" stroke-width="1.5" fill="none"/></g><g transform="translate(319.0 230.5) scale(0.9) translate(-319.0 -230.5)" opacity="0.85"><rect x="315.5" y="227.0" width="8" height="8" fill="#303030"/><rect x="317" y="226.5" width="5" height="3" fill="#e0e0e0"/></g><g transform="translate(334.0 230.5) scale(0.9) translate(-334.0 -230.5)" opacity="0.85"><path d="M331 229.5h7v4h-7z" fill="#a0a0a0" stroke="#202020"/><path d="M332 226.5h5v3h-5z" fill="#fff" stroke="#202020" stroke-width="0.8"/></g><g transform="translate(346.0 230.5) scale(0.9) translate(-346.0 -230.5)" opacity="0.85"><rect x="342.5" y="228.0" width="8" height="6" fill="none" stroke="#404040" stroke-dasharray="1 1"/></g><g transform="translate(361.5 230.5) scale(0.9) translate(-361.5 -230.5)" opacity="0.85"><path d="M358 230.5q3-3 6 0M360 232.5h5" stroke="#a8a8a8" fill="none"/></g><g transform="translate(374.5 230.5) scale(0.9) translate(-374.5 -230.5)" opacity="0.85"><path d="M371 230.5q3-3 6 0M373 232.5h5" stroke="#a8a8a8" fill="none"/></g><g transform="translate(386.6 230.5) scale(0.9) translate(-386.6 -230.5)" opacity="0.85"><path d="M383.5 233.5l6-6" stroke="#e02020" stroke-width="1.5"/><path d="M382.5 232.5h3M387.5 233.5h3" stroke="#20a0a0" stroke-width="1.5"/><circle cx="386.5" cy="227.5" r="1" fill="#202020"/></g><g transform="translate(401.6 230.5) scale(0.9) translate(-401.6 -230.5)" opacity="0.85"><circle cx="400.6" cy="229.5" r="3.3" fill="#f0f0f0" stroke="#202020"/><path d="M403.1 232.0l3 3" stroke="#202020" stroke-width="1.6"/><path d="M398.6 229.5h4" stroke="#e02020"/></g><g transform="translate(414.4 230.5) scale(0.9) translate(-414.4 -230.5)" opacity="0.85"><circle cx="413.4" cy="229.5" r="3.3" fill="#f0f0f0" stroke="#202020"/><path d="M415.9 232.0l3 3" stroke="#202020" stroke-width="1.6"/><path d="M411.4 229.5h4M413.4 227.5v4" stroke="#e02020"/></g><g transform="translate(427.1 230.5) scale(0.9) translate(-427.1 -230.5)" opacity="0.85"><path d="M425.5 234.5l4-8" stroke="#202020" stroke-width="1.8"/></g><g transform="translate(442.75 230.5) scale(0.9) translate(-442.75 -230.5)" opacity="0.85"><rect x="439.5" y="227.5" width="7" height="6" fill="#909090"/><path d="M439.5 229.5h7M439.5 231.5h7M441.5 227.5v6M444.0 227.5v6" stroke="#d0d0d0" stroke-width="0.6"/></g><g transform="translate(455.25 230.5) scale(0.9) translate(-455.25 -230.5)" opacity="0.85"><path d="M452.5 226.5l5 4-3 1 4 3" stroke="#e02020" stroke-width="1.2" fill="none"/><path d="M454.5 234.5l3-2" stroke="#202020"/></g><g transform="translate(467.5 230.5) scale(0.9) translate(-467.5 -230.5)" opacity="0.85"><rect x="464.5" y="228.0" width="6" height="6" fill="#fff" stroke="#202020"/><path d="M466 230.5l3-2" stroke="#404040"/></g><g transform="translate(480.25 230.5) scale(0.9) translate(-480.25 -230.5)" opacity="0.85"><path d="M476.5 226.5l6 7" stroke="#e02020" stroke-width="1.2"/><path d="M479.5 231.5l3 3 1-4z" fill="#202020"/></g><g transform="translate(492.3 230.5) scale(0.9) translate(-492.3 -230.5)" opacity="0.85"><circle cx="491.3" cy="229.5" r="2.5" fill="none" stroke="#303030"/><circle cx="493.3" cy="231.5" r="2.5" fill="none" stroke="#303030"/></g><g transform="translate(504.5 230.5) scale(0.9) translate(-504.5 -230.5)" opacity="0.85"><path d="M500.5 228.5q3 3 4-2 1 4 4 0M502.5 233.5l4-4" stroke="#202020" stroke-width="1.6" fill="none"/></g><g transform="translate(516.75 230.5) scale(0.9) translate(-516.75 -230.5)" opacity="0.85"><path d="M513.5 234.5v-8h5M513.5 229.5h4" stroke="#202020" stroke-width="1.5" fill="none"/><path d="M517.5 234.5l3-7" stroke="#20a0a0" stroke-width="1.2"/></g><g transform="translate(528.5 230.5) scale(0.9) translate(-528.5 -230.5)" opacity="0.85"><rect x="524.5" y="226.5" width="8" height="8" fill="#404060"/><rect x="525.5" y="227.5" width="3" height="3" fill="#4060e0"/><rect x="528.5" y="230.5" width="3" height="3" fill="#e02020"/><rect x="528.5" y="227.5" width="3" height="3" fill="#20a0a0"/></g><g transform="translate(541.3 230.5) scale(0.9) translate(-541.3 -230.5)" opacity="0.85"><rect x="537" y="226.5" width="8" height="8" fill="#20a8b0"/><path d="M537 229.0h8M537 232.0h8M539.5 226.5v8M542.5 226.5v8" stroke="#202020" stroke-width="0.7"/></g><g transform="translate(557.2 230.5) scale(0.9) translate(-557.2 -230.5)" opacity="0.85"><rect x="554" y="226.5" width="7" height="8" fill="#e02020"/><rect x="556" y="228.5" width="3" height="4" fill="#2040a0"/></g><g transform="translate(573.0 230.5) scale(0.9) translate(-573.0 -230.5)" opacity="0.85"><rect x="570.5" y="227.0" width="6" height="7" fill="#fff" stroke="#404040"/><path d="M572 229.5l3 2M575 229.5l-3 2" stroke="#606060"/></g><g transform="translate(584.8 230.5) scale(0.9) translate(-584.8 -230.5)" opacity="0.85"><rect x="580.6" y="226.5" width="8" height="8" fill="#e0e0f0" stroke="#404040" stroke-width="0.7"/><circle cx="584.8" cy="230.5" r="2.5" fill="#2040c0"/></g><g transform="translate(597.2 230.5) scale(0.9) translate(-597.2 -230.5)" opacity="0.85"><path d="M593.4 234.5v-8h3l2 3v5z" fill="#a0a0a0" stroke="#202020" stroke-width="0.8"/><path d="M598.4 227.5h2v6" stroke="#e02020"/></g><g transform="translate(608.25 230.5) scale(0.9) translate(-608.25 -230.5)" opacity="0.85"><rect x="605" y="226.5" width="7" height="8" fill="#202020"/><rect x="606" y="227.5" width="5" height="2" fill="#e02020"/><rect x="606" y="231.5" width="5" height="2" fill="#2040c0"/></g><g transform="translate(624.8 230.5) scale(0.9) translate(-624.8 -230.5)" opacity="0.85"><path d="M620 226.5v7l1.5-1.5 1.5 2.5 1-1-1.5-2.5h2.5z" fill="#101010"/><text x="624" y="233.5" font-size="8" font-weight="bold" fill="#1020a0" font-family='"Liberation Sans"'>?</text></g><g transform="translate(637.9 230.5) scale(0.9) translate(-637.9 -230.5)" opacity="0.85"><path d="M633 230.5l5-4 4 3-5 4z" fill="#2030a0" stroke="#202020" stroke-width="0.8"/><path d="M635 230.5l4-3" stroke="#e02020"/><path d="M633 231.5l4 3 5-4" fill="none" stroke="#303030"/></g><g transform="translate(656.0 230.5) scale(0.9) translate(-656.0 -230.5)" opacity="0.85"><path d="M651 227.5h8M651 230.5h8M651 233.5h8M653 226.5v8M657 226.5v8" stroke="#a0a0a0" stroke-dasharray="1 1"/></g><g transform="translate(669.35 230.5) scale(0.9) translate(-669.35 -230.5)" opacity="0.85"><path d="M664 227.5h6M664 230.5h6M664 233.5h6M666 226.5v8" stroke="#606060" stroke-dasharray="1 1"/><path d="M669 230.5l4 4M673 230.5l-4 4" stroke="#2040a0"/></g><g transform="translate(687.9 230.5) scale(0.9) translate(-687.9 -230.5)" opacity="0.85"><path d="M683 232.5q0-7 5-7t5 7z" fill="#202020"/><path d="M683 230.5h10" stroke="#e02020" stroke-width="2"/><path d="M684 233.5h8" stroke="#202020" stroke-width="1.5"/></g><g transform="translate(701.3 230.5) scale(0.9) translate(-701.3 -230.5)" opacity="0.85"><path d="M696 234.5v-7l2 3 3-3 2 3 3-3v7z" fill="#202020"/></g><g transform="translate(712.35 230.5) scale(0.9) translate(-712.35 -230.5)" opacity="0.85"><path d="M709.7 234.5l2-5 3 3M711.7 229.5l-3-2" stroke="#808080" stroke-width="1.4" fill="none"/><circle cx="712.7" cy="227.5" r="1.2" fill="#808080"/></g><g transform="translate(725.75 230.5) scale(0.9) translate(-725.75 -230.5)" opacity="0.85"><path d="M721.5 234.5l7-7M723.5 227.5l5 5" stroke="#b8b8b8" stroke-width="1.3"/></g><g transform="translate(738.4 230.5) scale(0.9) translate(-738.4 -230.5)" opacity="0.85"><path d="M734 234.5l7-7M736 227.5l5 5" stroke="#b8b8b8" stroke-width="1.3"/></g><g transform="translate(750.25 230.5) scale(0.9) translate(-750.25 -230.5)" opacity="0.85"><path d="M746 228.5l8 6" stroke="#202020" stroke-width="1"/><ellipse cx="750.25" cy="230.5" rx="4" ry="2.5" fill="none" stroke="#404040" stroke-width="1.2"/></g><g transform="translate(762.35 230.5) scale(0.9) translate(-762.35 -230.5)" opacity="0.85"><path d="M757.7 233.5q1-7 8-7-1 7-8 7z" fill="#909090"/></g><g transform="translate(777.85 230.5) scale(0.9) translate(-777.85 -230.5)" opacity="0.85"><path d="M774.7 227.5h6M777.7 227.5v7" stroke="#e02020" stroke-width="1.5"/><path d="M774.7 226.5h6" stroke="#2040a0"/></g><g transform="translate(281.5 245.5) scale(0.9) translate(-281.5 -245.5)" opacity="0.85"><rect x="277.5" y="242.0" width="8" height="8" rx="1" fill="#f08080" stroke="#303030"/><path d="M278 242.5l3 0 4 5v3h-3l-4-5z" fill="#ff3030"/><path d="M281 242.5l4 4" stroke="#f8c0c0"/></g><g transform="translate(293.75 245.5) scale(0.9) translate(-293.75 -245.5)" opacity="0.85"><rect x="290.0" y="242.0" width="8" height="8" rx="1" fill="#f4f4f4" stroke="#505050"/><path d="M291.5 243.5l5 5" stroke="#909090"/><rect x="290.5" y="243.5" width="2" height="3" fill="#ff4040"/></g><g transform="translate(306.5 245.5) scale(0.9) translate(-306.5 -245.5)" opacity="0.85"><rect x="302.5" y="242.0" width="8" height="8" rx="1" fill="#f0f0f0" stroke="#202020"/><path d="M303 242.5h3l4 5v3h-3l-4-4z" fill="#ff3030"/></g><g transform="translate(318.5 245.5) scale(0.9) translate(-318.5 -245.5)" opacity="0.85"><rect x="314.5" y="242.0" width="8" height="8" rx="1" fill="#f0f0f0" stroke="#202020"/><rect x="315" y="242.5" width="3" height="7" fill="#ff3030"/><rect x="319" y="245.5" width="3" height="3" fill="#ff3030"/></g><g transform="translate(331.5 245.5) scale(0.9) translate(-331.5 -245.5)" opacity="0.85"><rect x="327.5" y="242.0" width="8" height="8" rx="1" fill="#f8a0a0" stroke="#202020"/><path d="M328 242.5h3l4 4v4h-2l-5-5z" fill="#ff4040"/><path d="M332 242.5l3 3" stroke="#40c0d0"/></g><g transform="translate(346.25 245.5) scale(0.9) translate(-346.25 -245.5)" opacity="0.85"><rect x="342.5" y="241.5" width="7.5" height="2.5" rx="1" fill="#202020"/><rect x="343.5" y="242.0" width="2" height="1.5" fill="#2030c0"/><rect x="345.5" y="242.0" width="2" height="1.5" fill="#30c0c0"/><rect x="347.5" y="242.0" width="1.5" height="1.5" fill="#ff3030"/><path d="M342.5 247.0h7.5M346.5 245.5v3" stroke="#ff2020" stroke-width="1.6"/></g><g transform="translate(358.75 245.5) scale(0.9) translate(-358.75 -245.5)" opacity="0.85"><rect x="355" y="241.5" width="7.5" height="2.5" rx="1" fill="#202020"/><rect x="356" y="242.0" width="2" height="1.5" fill="#2030c0"/><rect x="358" y="242.0" width="2" height="1.5" fill="#30c0c0"/><rect x="360" y="242.0" width="1.5" height="1.5" fill="#ff3030"/><path d="M355 247.0h7.5M359 245.5v3" stroke="#ff2020" stroke-width="1.6"/></g><g transform="translate(370.75 245.5) scale(0.9) translate(-370.75 -245.5)" opacity="0.85"><rect x="367" y="241.5" width="7.5" height="2.5" rx="1" fill="#202020"/><rect x="368" y="242.0" width="2" height="1.5" fill="#2030c0"/><rect x="370" y="242.0" width="2" height="1.5" fill="#30c0c0"/><text x="367" y="249.0" font-size="5.5" fill="#ff2020" font-family='"Liberation Sans"' font-weight="bold">Qz</text></g><g transform="translate(382.875 245.5) scale(0.9) translate(-382.875 -245.5)" opacity="0.85"><rect x="379" y="241.5" width="7.75" height="2.5" rx="1" fill="#202020"/><rect x="380" y="242.0" width="2" height="1.5" fill="#2030c0"/><rect x="382" y="242.0" width="2" height="1.5" fill="#30c0c0"/><text x="379" y="249.0" font-size="5.5" fill="#ff2020" font-family='"Liberation Sans"' font-weight="bold">Qz</text></g><g transform="translate(396.125 245.5) scale(0.9) translate(-396.125 -245.5)" opacity="0.85"><rect x="391.75" y="241.5" width="8.75" height="2.5" rx="1" fill="#202020"/><rect x="392.75" y="242.0" width="2" height="1.5" fill="#2030c0"/><rect x="394.75" y="242.0" width="2" height="1.5" fill="#30c0c0"/><text x="391.75" y="249.0" font-size="5.5" fill="#ff2020" font-family='"Liberation Sans"' font-weight="bold">Qz</text></g><g transform="translate(410.5 245.5) scale(0.9) translate(-410.5 -245.5)" opacity="0.85"><rect x="407" y="241.5" width="7" height="2.5" rx="1" fill="#202020"/><rect x="408" y="242.0" width="2" height="1.5" fill="#2030c0"/><rect x="410" y="242.0" width="2" height="1.5" fill="#30c0c0"/><rect x="412" y="242.0" width="1.5" height="1.5" fill="#ff3030"/><path d="M407 247.0h7M411 245.5v3" stroke="#ff2020" stroke-width="1.6"/></g><g transform="translate(426.25 245.5) scale(0.9) translate(-426.25 -245.5)" opacity="0.85"><path d="M422.5 242.5h7.5" stroke="#ff2020" stroke-width="1.8"/><path d="M423.5 244.5h6.5" stroke="#303030"/><text x="423.0" y="249.5" font-size="5" fill="#ff2020" font-family='"Liberation Sans"' font-weight="bold">Ny</text></g><g transform="translate(439.375 245.5) scale(0.9) translate(-439.375 -245.5)" opacity="0.85"><path d="M435 242.5h8.75" stroke="#ff2020" stroke-width="1.8"/><path d="M436 244.5h7.75" stroke="#303030"/><text x="435.5" y="249.5" font-size="5" fill="#ff2020" font-family='"Liberation Sans"' font-weight="bold">Ny</text></g><g transform="translate(451.25 245.5) scale(0.9) translate(-451.25 -245.5)" opacity="0.85"><path d="M447.5 242.5h7.5" stroke="#ff2020" stroke-width="1.8"/><path d="M448.5 244.5h6.5" stroke="#303030"/><text x="448.0" y="249.5" font-size="5" fill="#ff2020" font-family='"Liberation Sans"' font-weight="bold">Ny</text></g><g transform="translate(462.5 245.5) scale(0.9) translate(-462.5 -245.5)" opacity="0.85"><path d="M458.75 248.5h4v-3h4v-3" stroke="#a0a0a0" fill="none"/></g><g transform="translate(478.9 245.5) scale(0.9) translate(-478.9 -245.5)" opacity="0.85"><path d="M475 249.5v-7h7v7z" fill="#606060"/><path d="M476 245.5h5M476 243.5h5" stroke="#c0c0c0" stroke-width="0.8"/></g><g transform="translate(492.3 245.5) scale(0.9) translate(-492.3 -245.5)" opacity="0.85"><path d="M488 249.5v-5l3-3 3 3v5z" fill="#707070"/><path d="M493 249.5v-4l2-2 2 2v4z" fill="#909090"/></g><g transform="translate(507.75 245.5) scale(0.9) translate(-507.75 -245.5)" opacity="0.85"><rect x="504.5" y="242.0" width="8" height="7" fill="#202040"/><rect x="505.5" y="243.0" width="2.5" height="2" fill="#e02020"/><rect x="509" y="243.0" width="2.5" height="2" fill="#20a0c0"/><rect x="505.5" y="246.0" width="2.5" height="2" fill="#20a0c0"/></g><g transform="translate(519.85 245.5) scale(0.9) translate(-519.85 -245.5)" opacity="0.85"><path d="M515.7 242.5h3M519.7 242.5h3M515.7 245.5h3M519.7 245.5h3M515.7 248.5h3M519.7 248.5h3" stroke="#404040" stroke-width="1.4"/></g><g transform="translate(532.25 245.5) scale(0.9) translate(-532.25 -245.5)" opacity="0.85"><path d="M528.5 242.5h7.5" stroke="#ff2020" stroke-width="1.8"/><path d="M529.5 244.5h6.5" stroke="#303030"/><text x="529.0" y="249.5" font-size="5" fill="#ff2020" font-family='"Liberation Sans"' font-weight="bold">Ny</text></g><g transform="translate(550.25 245.5) scale(0.9) translate(-550.25 -245.5)" opacity="0.85"><rect x="544.5" y="241.5" width="11.5" height="3" fill="#202040"/><text x="545.5" y="249.5" font-size="6" fill="#e02020" font-family='"Liberation Sans"'>A</text></g><g transform="translate(562.9 245.5) scale(0.9) translate(-562.9 -245.5)" opacity="0.85"><rect x="559" y="241.5" width="7.7999999999999545" height="3" fill="#202040"/><text x="560" y="249.5" font-size="6" fill="#e02020" font-family='"Liberation Sans"'>A</text></g><g transform="translate(575.8 245.5) scale(0.9) translate(-575.8 -245.5)" opacity="0.85"><path d="M572 247.5h7.600000000000023" stroke="#303060" stroke-width="2"/><path d="M575.8 241.5v3" stroke="#202020"/><path d="M573 243.5h5.600000000000023" stroke="#e02020"/></g><g transform="translate(588.5999999999999 245.5) scale(0.9) translate(-588.5999999999999 -245.5)" opacity="0.85"><path d="M583.8 247.5h9.600000000000023" stroke="#303060" stroke-width="2"/><path d="M588.5999999999999 241.5v3" stroke="#202020"/><path d="M584.8 243.5h7.600000000000023" stroke="#e02020"/></g><g transform="translate(600.85 245.5) scale(0.9) translate(-600.85 -245.5)" opacity="0.85"><path d="M598.7 241.5v8M598.7 248.5h5" stroke="#20a8b0" stroke-width="1.5" fill="none"/><path d="M601.7 243.5h3" stroke="#404040"/></g><g transform="translate(612.4 245.5) scale(0.9) translate(-612.4 -245.5)" opacity="0.85"><path d="M609 241.5v8M611 241.5v8" stroke="#20a8b0" stroke-width="1.5"/><text x="613" y="244.5" font-size="4" fill="#202020" font-family='"Liberation Sans"'>0.2</text></g><g transform="translate(624.2 245.5) scale(0.9) translate(-624.2 -245.5)" opacity="0.85"><path d="M622 241.5v8h6" stroke="#20a8b0" stroke-width="1.5" fill="none"/><path d="M624 247.5h4" stroke="#e02020" stroke-width="1.2"/></g><g transform="translate(637.8 245.5) scale(0.9) translate(-637.8 -245.5)" opacity="0.85"><path d="M636 241.5v8h6" stroke="#20a8b0" stroke-width="1.5" fill="none"/><path d="M638 247.5h4" stroke="#e02020" stroke-width="1.2"/></g><g transform="translate(653.3 245.5) scale(0.9) translate(-653.3 -245.5)" opacity="0.85"><rect x="649.5" y="242.0" width="7" height="8" fill="#909090" stroke="#303030"/><path d="M650 244.5h6M650 247.5h6M653 241.5v8" stroke="#404040"/></g><g transform="translate(666.25 245.5) scale(0.9) translate(-666.25 -245.5)" opacity="0.85"><rect x="661.5" y="242.0" width="7" height="8" fill="#909090" stroke="#303030"/><path d="M662 244.5h6M662 247.5h6M665 241.5v8" stroke="#404040"/><path d="M667 245.5l4 4M671 245.5l-4 4" stroke="#2040c0"/></g><g transform="translate(677.8 245.5) scale(0.9) translate(-677.8 -245.5)" opacity="0.85"><rect x="674.1" y="242.0" width="7" height="8" fill="#b8b8b8" stroke="#a0a0a0"/></g><g transform="translate(693.8 245.5) scale(0.9) translate(-693.8 -245.5)" opacity="0.85"><rect x="690.1" y="242.0" width="8" height="8" fill="#20a8b0" stroke="#303030"/><path d="M690.6 244.5h7M690.6 247.0h7M692.6 241.5v8M695.6 241.5v8" stroke="#303030" stroke-width="0.7"/></g><g transform="translate(705.9 245.5) scale(0.9) translate(-705.9 -245.5)" opacity="0.85"><rect x="702.5" y="242.0" width="8" height="8" fill="#404040"/><rect x="704" y="242.5" width="5" height="5" fill="#20a8b0"/></g><g transform="translate(717.75 245.5) scale(0.9) translate(-717.75 -245.5)" opacity="0.85"><rect x="713.5" y="242.0" width="8" height="8" fill="#20a8b0" stroke="#303030"/><path d="M714 244.5h7M714 247.0h7M716 241.5v8M719 241.5v8" stroke="#303030" stroke-width="0.7"/><path d="M719 245.5l4 4M723 245.5l-4 4" stroke="#2040c0"/></g><g transform="translate(734.25 245.5) scale(0.9) translate(-734.25 -245.5)" opacity="0.85"><rect x="731" y="242.0" width="6" height="8" fill="#e8e8e8" stroke="#303030" stroke-width="1.5"/></g><g transform="translate(747.05 245.5) scale(0.9) translate(-747.05 -245.5)" opacity="0.85"><rect x="743.8" y="242.0" width="6" height="8" fill="#e8e8e8" stroke="#303030" stroke-width="1.5"/><path d="M748.8 246.5l3 3M751.8 246.5l-3 3" stroke="#2040c0"/></g><g transform="translate(759.25 245.5) scale(0.9) translate(-759.25 -245.5)" opacity="0.85"><rect x="755.5" y="242.0" width="6" height="8" fill="#e8e8e8" stroke="#303030" stroke-width="1.5"/><path d="M760.5 246.5l3 3M763.5 246.5l-3 3" stroke="#2040c0"/></g><g transform="translate(774.7 245.5) scale(0.9) translate(-774.7 -245.5)" opacity="0.85"><rect x="770.9" y="242.0" width="7" height="8" fill="#b8b8b8" stroke="#a0a0a0"/></g><path d="M285.5 254v189M285.5 254v241" stroke="#a0a0a0" stroke-dasharray="1 1"/><path d="M273 255.5h11M288 255.5h11" stroke="#909090" stroke-dasharray="1 1"/><path d="M272 390.5h13M272 392.5h13M287 285.5h13M287 311.5h13M287 324.5h13M287 373.5h13M287 405.5h13" stroke="#a0a0a0" stroke-dasharray="1 1"/><path d="M286 495.5h15" stroke="#fff"/><path d="M286 496.5h15" stroke="#808080"/><g transform="translate(278 263.3) scale(0.85) translate(-278 -263.3)" opacity="0.85"><circle cx="278" cy="263.3" r="3.5" fill="none" stroke="#808080"/><path d="M274 266.3l8-7" stroke="#e02020" stroke-width="1.3"/></g><g transform="translate(278 274.5) scale(0.85) translate(-278 -274.5)" opacity="0.85"><path d="M274 278.5l8-8" stroke="#202020" stroke-width="3"/><path d="M275 277.5l6-6" stroke="#20a8b0" stroke-width="1.3"/></g><g transform="translate(278 286) scale(0.85) translate(-278 -286)" opacity="0.85"><path d="M274 290v-5l2-2 2 2 2-2 2 2v5z" fill="#303030"/><path d="M274 289h8" stroke="#20a8b0" stroke-width="1.5"/></g><g transform="translate(278 296.7) scale(0.85) translate(-278 -296.7)" opacity="0.85"><path d="M274 293.7h8v7h-8z" fill="#f0f0f0" stroke="#202020" stroke-width="1.2"/><path d="M275 296.7h6" stroke="#20a8b0" stroke-width="1.2"/></g><g transform="translate(278 308.5) scale(0.85) translate(-278 -308.5)" opacity="0.85"><path d="M274 306.5h8v6h-8z" fill="#20c0d0" stroke="#202020"/><path d="M277 306.5l3-3" stroke="#e02020"/></g><g transform="translate(278 320) scale(0.85) translate(-278 -320)" opacity="0.85"><path d="M274 324l8-8" stroke="#202020" stroke-width="2.5"/><path d="M274 321h4v3" stroke="#20a8b0" stroke-width="1.5" fill="none"/></g><g transform="translate(278 331.7) scale(0.85) translate(-278 -331.7)" opacity="0.85"><rect x="274" y="328.7" width="8" height="7" fill="#a0a0a0" stroke="#202020"/><path d="M275 331.7h6" stroke="#fff"/></g><g transform="translate(278 342.5) scale(0.85) translate(-278 -342.5)" opacity="0.85"><path d="M278 338.5v7" stroke="#20a8b0" stroke-width="1.5"/><path d="M276.5 344.5l1.5 2 1.5-2" stroke="#202020" fill="none"/></g><g transform="translate(278 354.7) scale(0.85) translate(-278 -354.7)" opacity="0.85"><path d="M274 358.7v-4q2-3 4 0 2-3 4 0v4" stroke="#20a8b0" stroke-width="1.3" fill="none"/></g><g transform="translate(278 366) scale(0.85) translate(-278 -366)" opacity="0.85"><path d="M275 368h7" stroke="#202020" stroke-width="1.5"/><path d="M278 363v4" stroke="#e02020" stroke-width="1.5"/></g><g transform="translate(278 376.7) scale(0.85) translate(-278 -376.7)" opacity="0.85"><path d="M274 374.7h8M274 379.7h8" stroke="#303030" stroke-width="1.3"/><path d="M274 377.2h8" stroke="#e02020" stroke-width="1.3"/></g><g transform="translate(278 400) scale(0.85) translate(-278 -400)" opacity="0.85"><path d="M274 404l4-4 4 4M276 398l4 2" stroke="#e02020" stroke-width="1.2" fill="none"/><path d="M276 403l5-6" stroke="#202020"/></g><g transform="translate(278 411) scale(0.85) translate(-278 -411)" opacity="0.85"><path d="M274 415l4-4 4 4M276 409l4 2" stroke="#e02020" stroke-width="1.2" fill="none"/><path d="M276 414l5-6" stroke="#202020"/></g><g transform="translate(278 422) scale(0.85) translate(-278 -422)" opacity="0.85"><path d="M274 425h8" stroke="#202020" stroke-width="1.5"/><path d="M278 418v5M275 421h6" stroke="#e02020" stroke-width="1.2"/></g><g transform="translate(278 434.8) scale(0.85) translate(-278 -434.8)" opacity="0.85"><path d="M274 430.8l8 8M282 430.8l-8 8" stroke="#202020" stroke-width="1.2"/><path d="M279 436.8h3" stroke="#2040c0" stroke-width="1.5"/><circle cx="275" cy="431.8" r="1" fill="#e02020"/></g><g transform="translate(294 264) scale(0.9) translate(-294 -264)" opacity="0.9"><path d="M291 260v7l2-2 2 3 1-1-2-3h3z" fill="#fff" stroke="#303030" stroke-width="0.8"/></g><g transform="translate(294 277.5) scale(0.9) translate(-294 -277.5)" opacity="0.9"><path d="M289 273.5h10l-5 8z" fill="#f0f0f0" stroke="#202020" stroke-width="1.2"/></g><g transform="translate(294 290) scale(0.9) translate(-294 -290)" opacity="0.9"><path d="M290 288q4-3 6 1t2 5M291 292h3" stroke="#b0b0b0" fill="none"/></g><g transform="translate(294 301) scale(0.9) translate(-294 -301)" opacity="0.9"><path d="M290 299q4-3 6 1t2 5M291 303h3" stroke="#b0b0b0" fill="none"/></g><g transform="translate(294 318) scale(0.9) translate(-294 -318)" opacity="0.9"><path d="M293 313h2v3l2 2v5h-6v-5l2-2z" fill="#303030"/><rect x="292" y="319" width="4" height="2" fill="#fff"/></g><g transform="translate(294 332) scale(0.9) translate(-294 -332)" opacity="0.9"><rect x="290" y="329" width="8" height="6" fill="#e04040" stroke="#404040" stroke-width="0.7"/><rect x="292" y="331" width="4" height="2" fill="#f8c0c0"/></g><g transform="translate(294 344) scale(0.9) translate(-294 -344)" opacity="0.9"><rect x="289.5" y="341.5" width="9" height="6" fill="none" stroke="#e02020" stroke-dasharray="1.5 1"/></g><g transform="translate(294 355) scale(0.9) translate(-294 -355)" opacity="0.9"><rect x="289.5" y="352.5" width="9" height="6" fill="#e0e0e0" stroke="#404040" stroke-width="0.9"/></g><g transform="translate(294 366.8) scale(0.9) translate(-294 -366.8)" opacity="0.9"><rect x="290" y="362.8" width="8" height="8" fill="#404040"/><rect x="291" y="363.8" width="2.5" height="2.5" fill="#e02020"/><rect x="294.5" y="367.3" width="2.5" height="2.5" fill="#d0d0d0"/><rect x="294.5" y="363.8" width="2.5" height="2.5" fill="#d0d0d0"/><rect x="291" y="367.3" width="2.5" height="2.5" fill="#d0d0d0"/></g><g transform="translate(294 382) scale(0.9) translate(-294 -382)" opacity="0.9"><path d="M294 378v7" stroke="#202020" stroke-width="1.2"/><path d="M292 383l2 3 2-3" stroke="#202020" fill="none"/></g><g transform="translate(294 392.7) scale(0.9) translate(-294 -392.7)" opacity="0.9"><path d="M290 389.7v7M293 389.7v7M296 389.7v7M298 389.7v7" stroke="#303030" stroke-width="1.3"/><path d="M290 389.7h8" stroke="#303030"/></g><g transform="translate(294 415) scale(0.9) translate(-294 -415)" opacity="0.9"><rect x="290" y="411" width="8" height="8" fill="#f0f0f0" stroke="#303030"/><path d="M291 418l3-3 3 3" fill="#20a8b0"/></g><g transform="translate(294 427.7) scale(0.9) translate(-294 -427.7)" opacity="0.9"><circle cx="294" cy="427.7" r="4" fill="#20a8b0"/><path d="M291 425.7l4 6" stroke="#e02020" stroke-width="2"/></g><g transform="translate(294 439) scale(0.9) translate(-294 -439)" opacity="0.9"><path d="M290 443h8" stroke="#303030" stroke-width="1.3"/><path d="M292 441l6-6" stroke="#e02020" stroke-width="1.5"/></g><g transform="translate(294 450.4) scale(0.9) translate(-294 -450.4)" opacity="0.9"><rect x="290" y="447.4" width="8" height="7" fill="#f0f0f0" stroke="#303030"/><rect x="291" y="449.4" width="3" height="3" fill="#e02020"/></g><g transform="translate(294 461.7) scale(0.9) translate(-294 -461.7)" opacity="0.9"><rect x="290" y="458.7" width="8" height="7" fill="#f0f0f0" stroke="#303030"/><path d="M293 463.7l4-4" stroke="#e02020" stroke-width="1.3"/></g><g transform="translate(294 473) scale(0.9) translate(-294 -473)" opacity="0.9"><path d="M291 469l6 6M297 469l-6 6" stroke="#303030"/><circle cx="291.5" cy="476" r="1.5" fill="none" stroke="#4060c0"/><circle cx="296.5" cy="476" r="1.5" fill="none" stroke="#4060c0"/></g><g transform="translate(294 484.4) scale(0.9) translate(-294 -484.4)" opacity="0.9"><path d="M294 480.4v5M290 488.4l4-3 4 3M291 483.4h6" stroke="#202020" stroke-width="1.2" fill="none"/></g><defs><pattern id="dotb" width="3" height="2" patternUnits="userSpaceOnUse"><rect width="3" height="2" fill="#9098f8"/><rect x="1" y="0" width="1" height="1" fill="#3040c0"/></pattern><pattern id="dotm" width="3" height="2" patternUnits="userSpaceOnUse"><rect width="3" height="2" fill="#b8c0f8"/><rect x="1" y="1" width="1" height="1" fill="#5060e0"/></pattern><pattern id="dotcy" width="3" height="4" patternUnits="userSpaceOnUse"><rect width="3" height="4" fill="#78e8f8"/><rect x="1" y="2" width="1" height="1" fill="#e0ffff"/></pattern><pattern id="dotl" width="4" height="2" patternUnits="userSpaceOnUse"><rect width="4" height="2" fill="#d0e0f8"/><rect x="1" y="1" width="1" height="1" fill="#80a0f0"/></pattern><pattern id="dotw" width="3" height="3" patternUnits="userSpaceOnUse"><rect width="3" height="3" fill="#f4f9f9"/><rect x="1" y="1" width="1" height="1" fill="#e6eef2"/></pattern><pattern id="dotc" width="3" height="3" patternUnits="userSpaceOnUse"><rect width="3" height="3" fill="#58e8f8"/><rect x="1" y="1" width="1" height="1" fill="#3ab8e0"/></pattern><pattern id="circ" width="3.5" height="3.5" patternUnits="userSpaceOnUse"><rect width="3.5" height="3.5" fill="#a8c8f4"/><circle cx="1.75" cy="1.75" r="1.2" fill="#d8f0f8" stroke="#7080ec" stroke-width="0.6"/></pattern></defs><rect x="323" y="261" width="73" height="4" fill="#f4f4f4"/><rect x="396" y="261" width="72" height="4" fill="url(#dotl)"/><rect x="468" y="261" width="72" height="4" fill="url(#dotcy)"/><rect x="540" y="261" width="72" height="4" fill="url(#dotm)"/><rect x="612" y="261" width="73" height="4" fill="url(#dotcy)"/><rect x="685" y="261" width="71" height="4" fill="url(#dotb)"/><rect x="323.5" y="260.5" width="433" height="5" rx="1.5" fill="none" stroke="#707070" stroke-width="0.9"/><rect x="395" y="260.5" width="2" height="5" fill="#202020"/><rect x="467" y="260.5" width="2" height="5" fill="#202020"/><rect x="539" y="260.5" width="2" height="5" fill="#202020"/><rect x="611" y="260.5" width="2" height="5" fill="#202020"/><rect x="684" y="260.5" width="2" height="5" fill="#202020"/><text x="396" y="259" font-size="6.3" fill="#000" font-family='"Liberation Mono",monospace' font-weight="normal" text-anchor="middle" stroke="#000" stroke-width="0.15" textLength="21.3" lengthAdjust="spacingAndGlyphs">s200d4</text><text x="468" y="259" font-size="6.3" fill="#000" font-family='"Liberation Mono",monospace' font-weight="normal" text-anchor="middle" stroke="#000" stroke-width="0.15" textLength="21.3" lengthAdjust="spacingAndGlyphs">s200d5</text><text x="540" y="259" font-size="6.3" fill="#000" font-family='"Liberation Mono",monospace' font-weight="normal" text-anchor="middle" stroke="#000" stroke-width="0.15" textLength="21.3" lengthAdjust="spacingAndGlyphs">s200d6</text><text x="612" y="259" font-size="6.3" fill="#000" font-family='"Liberation Mono",monospace' font-weight="normal" text-anchor="middle" stroke="#000" stroke-width="0.15" textLength="21.3" lengthAdjust="spacingAndGlyphs">s200d8</text><text x="685" y="259" font-size="6.3" fill="#000" font-family='"Liberation Mono",monospace' font-weight="normal" text-anchor="middle" stroke="#000" stroke-width="0.15" textLength="25" lengthAdjust="spacingAndGlyphs">s200d10</text><text x="757.5" y="259" font-size="6.3" fill="#000" font-family='"Liberation Mono",monospace' font-weight="normal" text-anchor="middle" stroke="#000" stroke-width="0.15" textLength="25" lengthAdjust="spacingAndGlyphs">s200d12</text><text x="323.5" y="271.8" font-size="6.4" fill="#000" font-family='"Liberation Mono",monospace' font-weight="normal" text-anchor="middle" stroke="#000" stroke-width="0.15" >0</text><text x="396" y="271.8" font-size="6.4" fill="#000" font-family='"Liberation Mono",monospace' font-weight="normal" text-anchor="middle" stroke="#000" stroke-width="0.15" textLength="14.2" lengthAdjust="spacingAndGlyphs">0.63</text><text x="468" y="271.8" font-size="6.4" fill="#000" font-family='"Liberation Mono",monospace' font-weight="normal" text-anchor="middle" stroke="#000" stroke-width="0.15" textLength="14.2" lengthAdjust="spacingAndGlyphs">0.98</text><text x="540.5" y="271.8" font-size="6.4" fill="#000" font-family='"Liberation Mono",monospace' font-weight="normal" text-anchor="middle" stroke="#000" stroke-width="0.15" textLength="14.2" lengthAdjust="spacingAndGlyphs">1.41</text><text x="612.5" y="271.8" font-size="6.4" fill="#000" font-family='"Liberation Mono",monospace' font-weight="normal" text-anchor="middle" stroke="#000" stroke-width="0.15" textLength="14.2" lengthAdjust="spacingAndGlyphs">2.51</text><text x="685" y="271.8" font-size="6.4" fill="#000" font-family='"Liberation Mono",monospace' font-weight="normal" text-anchor="middle" stroke="#000" stroke-width="0.15" textLength="14.2" lengthAdjust="spacingAndGlyphs">3.92</text><text x="757.5" y="271.8" font-size="6.4" fill="#000" font-family='"Liberation Mono",monospace' font-weight="normal" text-anchor="middle" stroke="#000" stroke-width="0.15" textLength="14.2" lengthAdjust="spacingAndGlyphs">5.65</text><text x="418.5" y="290" font-size="6.9" fill="#000" font-family='"Liberation Mono",monospace' font-weight="normal" text-anchor="start" stroke="#000" stroke-width="0.15" textLength="140" lengthAdjust="spacingAndGlyphs">Изополя арматуры вдоль оси X,см2/м</text><text x="318" y="298" font-size="6.6" fill="#000" font-family='"Liberation Mono",monospace' font-weight="normal" text-anchor="start" stroke="#000" stroke-width="0.15" textLength="40" lengthAdjust="spacingAndGlyphs">ПОСТОЯННОЕ</text><rect x="497" y="315" width="106.8" height="240.6" fill="url(#dotw)"/><ellipse cx="503" cy="317.5" rx="6" ry="3" fill="#c8e0f4"/><ellipse cx="519" cy="366" rx="8" ry="4.5" fill="#c8e0f4"/><ellipse cx="515" cy="389" rx="6" ry="4" fill="#c8e0f4"/><path d="M497 397 L518 396 L525 402 L531 409 L532 416 L529 420 L533 426 L530 433 L497 434z" fill="#c8e0f4"/><path d="M506 405 L516 404 L512 408 L509 418 L512 428 L523 428 L526 424 L528 430 L520 432 L507 431 L505 420z" fill="#80eaf6"/><path d="M497 436 L525 436 L534 443 L537 455 L533 462 L537 470 L535 475 L497 475z" fill="#c8e0f4"/><path d="M497 441 L512 440 L525 444 L528 455 L526 466 L530 474 L497 475z" fill="#80eaf6"/><path d="M508 446 h16 v4 h-16z M518 465 h10 v10 h-12z" fill="url(#circ)"/><path d="M497 475.5 L540 476 L541 482 L537 490 L539 500 L535 510 L533 515.5 L497 515.5z" fill="#c8e0f4"/><path d="M497 476 L530 478 L532 490 L528 500 L530 512 L528 515.5 L497 515.5z" fill="#80eaf6"/><path d="M507 484 L523 483 L528 490 L527 500 L531 506 L528 515 L508 515 L505 507 L506 495z" fill="url(#circ)"/><path d="M497 516 L537 516 L533 525 L536 540 L533 555.6 L497 555.6z" fill="#c8e0f4"/><path d="M497 516 L527 518 L528 530 L526 545 L530 555.6 L497 555.6z" fill="#80eaf6"/><path d="M505 517 L522 517 L525 526 L523 532 L528 545 L526 555.6 L499 555.6 L499 540 L503 530z" fill="url(#circ)"/><rect x="510.5" y="328.5" width="13" height="17.5" fill="#f8fcfc" stroke="#6070f0" stroke-width="1.1"/><rect x="510.5" y="368.7" width="13" height="17.5" fill="#f8fcfc" stroke="#6070f0" stroke-width="1.1"/><rect x="510.5" y="408.8" width="13" height="17.5" fill="#f8fcfc" stroke="#6070f0" stroke-width="1.1"/><rect x="510.5" y="448.8" width="13" height="17.5" fill="#f8fcfc" stroke="#6070f0" stroke-width="1.1"/><rect x="510.5" y="488.8" width="13" height="17.5" fill="#f8fcfc" stroke="#6070f0" stroke-width="1.1"/><rect x="510.5" y="529.0" width="13" height="17.5" fill="#f8fcfc" stroke="#6070f0" stroke-width="1.1"/><path d="M442.5 315V555.6M657.5 315V555.6" stroke="#303030" stroke-width="1.4" stroke-dasharray="1.5 0.5"/><path d="M442 315H497M603.8 315H658" stroke="#303030" stroke-width="1.4"/><path d="M497 315H603.8" stroke="#6878f0" stroke-width="1.2"/><path d="M442 355.2H497M603.8 355.2H658" stroke="#303030" stroke-width="1.4"/><path d="M497 355.2H603.8" stroke="#6878f0" stroke-width="1.2"/><path d="M442 395.3H497M603.8 395.3H658" stroke="#303030" stroke-width="1.4"/><path d="M497 395.3H603.8" stroke="#6878f0" stroke-width="1.2"/><path d="M442 435.3H497M603.8 435.3H658" stroke="#303030" stroke-width="1.4"/><path d="M497 435.3H603.8" stroke="#6878f0" stroke-width="1.2"/><path d="M442 475.3H497M603.8 475.3H658" stroke="#303030" stroke-width="1.4"/><path d="M497 475.3H603.8" stroke="#6878f0" stroke-width="1.2"/><path d="M442 515.5H497M603.8 515.5H658" stroke="#303030" stroke-width="1.4"/><path d="M497 515.5H603.8" stroke="#6878f0" stroke-width="1.2"/><path d="M497 315V555.6M603.8 315V555.6" stroke="#6878f0" stroke-width="1.2"/><path d="M497 555.6H603.8" stroke="#c02020" stroke-width="1.2" stroke-dasharray="1 1"/><rect x="441" y="554.5" width="3" height="2.5" fill="#e02020"/><rect x="656" y="554.5" width="3" height="2.5" fill="#e02020"/><path d="M497 315L603.8 305" stroke="#f04040" stroke-width="1"/><path d="M523.4 312.5280898876405V315M521.4 312L523.4 315L525.4 312" stroke="#f04040" stroke-width="0.9" fill="none"/><path d="M550.3 310.0093632958802V315M548.3 312L550.3 315L552.3 312" stroke="#f04040" stroke-width="0.9" fill="none"/><path d="M577 307.5093632958801V315M575 312L577 315L579 312" stroke="#f04040" stroke-width="0.9" fill="none"/><path d="M603.8 305.0V315M601.8 312L603.8 315L605.8 312" stroke="#f04040" stroke-width="0.9" fill="none"/><path d="M497 355.2L603.8 345.2" stroke="#f04040" stroke-width="1"/><path d="M523.4 352.72808988764046V355.2M521.4 352.2L523.4 355.2L525.4 352.2" stroke="#f04040" stroke-width="0.9" fill="none"/><path d="M550.3 350.20936329588017V355.2M548.3 352.2L550.3 355.2L552.3 352.2" stroke="#f04040" stroke-width="0.9" fill="none"/><path d="M577 347.70936329588017V355.2M575 352.2L577 355.2L579 352.2" stroke="#f04040" stroke-width="0.9" fill="none"/><path d="M603.8 345.2V355.2M601.8 352.2L603.8 355.2L605.8 352.2" stroke="#f04040" stroke-width="0.9" fill="none"/><path d="M497 395.3L603.8 385.3" stroke="#f04040" stroke-width="1"/><path d="M523.4 392.8280898876405V395.3M521.4 392.3L523.4 395.3L525.4 392.3" stroke="#f04040" stroke-width="0.9" fill="none"/><path d="M550.3 390.3093632958802V395.3M548.3 392.3L550.3 395.3L552.3 392.3" stroke="#f04040" stroke-width="0.9" fill="none"/><path d="M577 387.8093632958802V395.3M575 392.3L577 395.3L579 392.3" stroke="#f04040" stroke-width="0.9" fill="none"/><path d="M603.8 385.3V395.3M601.8 392.3L603.8 395.3L605.8 392.3" stroke="#f04040" stroke-width="0.9" fill="none"/><path d="M497 435.3L603.8 425.3" stroke="#f04040" stroke-width="1"/><path d="M523.4 432.8280898876405V435.3M521.4 432.3L523.4 435.3L525.4 432.3" stroke="#f04040" stroke-width="0.9" fill="none"/><path d="M550.3 430.3093632958802V435.3M548.3 432.3L550.3 435.3L552.3 432.3" stroke="#f04040" stroke-width="0.9" fill="none"/><path d="M577 427.8093632958802V435.3M575 432.3L577 435.3L579 432.3" stroke="#f04040" stroke-width="0.9" fill="none"/><path d="M603.8 425.3V435.3M601.8 432.3L603.8 435.3L605.8 432.3" stroke="#f04040" stroke-width="0.9" fill="none"/><path d="M497 475.3L603.8 465.3" stroke="#f04040" stroke-width="1"/><path d="M523.4 472.8280898876405V475.3M521.4 472.3L523.4 475.3L525.4 472.3" stroke="#f04040" stroke-width="0.9" fill="none"/><path d="M550.3 470.3093632958802V475.3M548.3 472.3L550.3 475.3L552.3 472.3" stroke="#f04040" stroke-width="0.9" fill="none"/><path d="M577 467.8093632958802V475.3M575 472.3L577 475.3L579 472.3" stroke="#f04040" stroke-width="0.9" fill="none"/><path d="M603.8 465.3V475.3M601.8 472.3L603.8 475.3L605.8 472.3" stroke="#f04040" stroke-width="0.9" fill="none"/><path d="M497 515.5L603.8 505.5" stroke="#f04040" stroke-width="1"/><path d="M523.4 513.0280898876405V515.5M521.4 512.5L523.4 515.5L525.4 512.5" stroke="#f04040" stroke-width="0.9" fill="none"/><path d="M550.3 510.5093632958802V515.5M548.3 512.5L550.3 515.5L552.3 512.5" stroke="#f04040" stroke-width="0.9" fill="none"/><path d="M577 508.0093632958801V515.5M575 512.5L577 515.5L579 512.5" stroke="#f04040" stroke-width="0.9" fill="none"/><path d="M603.8 505.5V515.5M601.8 512.5L603.8 515.5L605.8 512.5" stroke="#f04040" stroke-width="0.9" fill="none"/><path d="M442.5 555.5V534" stroke="#20a8b0"/><path d="M442.5 555.5H455" stroke="#20a8b0"/><path d="M453 553.5l3 2-3 2" stroke="#20a8b0" fill="none"/><text x="437.5" y="538" font-size="5.5" fill="#404040" font-family='"Liberation Mono",monospace' font-weight="normal" text-anchor="start" >Z</text><text x="458" y="559" font-size="5.5" fill="#404040" font-family='"Liberation Mono",monospace' font-weight="normal" text-anchor="start" >X</text><path d="M337.5 307.5l4 4M341.5 307.5l-4 4" stroke="#000" stroke-width="0.9"/><path d="M319 363.5h24M319 385.5h24M319 420.5h24" stroke="#a0a0a0"/><g transform="translate(323 320.5) scale(0.85) translate(-323 -320.5)" opacity="0.8"><path d="M319 318.0h8M323 317.5v6" stroke="#20a8b0" stroke-width="1.6"/><path d="M321 324.0h4M319 319.5h2M325 319.5h2" stroke="#202020"/></g><g transform="translate(336 320.5) scale(0.85) translate(-336 -320.5)" opacity="0.8"><path d="M332 317.5h8M336 317.5v7" stroke="#20a8b0" stroke-width="2" stroke-dasharray="1 1"/><path d="M334 321.5h4" stroke="#202020"/></g><g transform="translate(323 330.5) scale(0.85) translate(-323 -330.5)" opacity="0.8"><path d="M319.5 333.0v-5l3 5v-5M324 328.0h2.5v5h-2.5zM324 330.5h2.5" stroke="#202020" stroke-width="1.1" fill="none"/></g><g transform="translate(336 330.5) scale(0.85) translate(-336 -330.5)" opacity="0.8"><path d="M332.5 333.0v-5l3 5v-5M337 328.0v5M337 330.5h2.5M339.5 328.0v5" stroke="#202020" stroke-width="1.1" fill="none"/></g><g transform="translate(323 341.5) scale(0.85) translate(-323 -341.5)" opacity="0.8"><path d="M319.5 344.0v-5l3 5v-5M324 339.0h2.5v5h-2.5zM324 341.5h2.5" stroke="#202020" stroke-width="1.1" fill="none"/></g><g transform="translate(336 341.5) scale(0.85) translate(-336 -341.5)" opacity="0.8"><text x="336" y="344.5" font-size="7" fill="#e02020" font-family='"Liberation Sans"' text-anchor="middle">1,1</text></g><g transform="translate(323 353) scale(0.85) translate(-323 -353)" opacity="0.8"><path d="M320 356v-6h4l2 2-2 2h-2" stroke="#e02020" stroke-width="1.6" fill="none"/><path d="M323 356h3" stroke="#606060"/></g><g transform="translate(323 367) scale(0.85) translate(-323 -367)" opacity="0.8"><circle cx="323" cy="367" r="3.5" fill="none" stroke="#e02020" stroke-width="1.3"/><path d="M319 371l8-8" stroke="#808080"/></g><g transform="translate(336 367) scale(0.85) translate(-336 -367)" opacity="0.8"><path d="M332 369h8M334 365v6" stroke="#b0b0b0" fill="none" stroke-dasharray="1 1"/></g><g transform="translate(323 378) scale(0.85) translate(-323 -378)" opacity="0.8"><path d="M320 374l6 4-5 4" stroke="#e02020" stroke-width="1.5" fill="none"/><path d="M319 382h8" stroke="#303030"/></g><g transform="translate(336 378) scale(0.85) translate(-336 -378)" opacity="0.8"><path d="M332 380h8M334 376v6" stroke="#b0b0b0" fill="none" stroke-dasharray="1 1"/></g><g transform="translate(323 393) scale(0.85) translate(-323 -393)" opacity="0.8"><rect x="318" y="389" width="10" height="8" fill="url(#circ)" stroke="#303060" stroke-width="0.7"/></g><g transform="translate(336 393) scale(0.85) translate(-336 -393)" opacity="0.8"><path d="M332 389v8h8z" fill="#20a8b0"/><path d="M332 389l8 8" stroke="#303030"/></g><g transform="translate(323 402) scale(0.85) translate(-323 -402)" opacity="0.8"><path d="M319 406h8" stroke="#20a8b0" stroke-width="1.2"/><path d="M323 400v4h3" stroke="#303030" stroke-width="1.2" fill="none"/></g><g transform="translate(336 402) scale(0.85) translate(-336 -402)" opacity="0.8"><path d="M332 406h8" stroke="#20a8b0" stroke-width="1.2"/><path d="M336 400v4h3" stroke="#303030" stroke-width="1.2" fill="none"/></g><g transform="translate(323 414) scale(0.85) translate(-323 -414)" opacity="0.8"><rect x="319" y="410" width="8" height="8" fill="none" stroke="#303030" stroke-width="1.2"/><path d="M319 418h8" stroke="#20a8b0" stroke-width="1.5"/></g><g transform="translate(336 414) scale(0.85) translate(-336 -414)" opacity="0.8"><path d="M333 410v7h7" stroke="#303030" stroke-width="1.5" fill="none"/><rect x="335" y="413" width="4" height="3" fill="none" stroke="#303030"/></g><g transform="translate(323 429) scale(0.85) translate(-323 -429)" opacity="0.8"><circle cx="323" cy="429" r="2.5" fill="none" stroke="#a0a0a0"/><path d="M319 429h8M323 425v8" stroke="#c0c0c0" stroke-dasharray="1 1"/></g></svg><div class="abs" style="left:0;top:598px;width:800px;height:2px;background:#eeeeee"></div>
</body></html>
